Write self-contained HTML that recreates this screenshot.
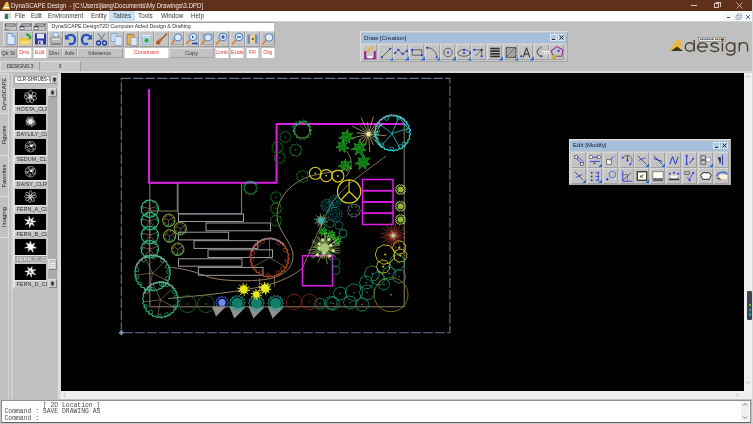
<!DOCTYPE html>
<html><head><meta charset="utf-8">
<style>
*{box-sizing:border-box}
html,body{margin:0;padding:0}
body{width:753px;height:424px;overflow:hidden;position:relative;background:#c0c0c0;font-family:"Liberation Sans",sans-serif;color:#000;will-change:transform}
.a{position:absolute}
.t{position:absolute;white-space:pre;line-height:1}
.tb{position:absolute;height:9.5px;top:48.3px;font-size:5.5px;line-height:8.4px;text-align:center;white-space:pre}
.tbg{background:#c2c2c2;border-right:1px solid #a4a4a4;border-bottom:1px solid #a4a4a4;border-top:1px solid #dcdcdc;border-left:1px solid #dcdcdc;color:#333}
.tbw{background:#fff;color:#e03a3a;border-left:0.5px solid #d8d8d8;border-right:0.5px solid #d8d8d8}
.ib{position:absolute;top:31px;width:15px;height:16px;background:#c6c6c6;border-right:1px solid #9c9c9c;border-bottom:1px solid #9c9c9c;border-top:1px solid #dadada;border-left:1px solid #dadada}
.ib svg,.db svg,.eb svg{position:absolute;left:-1px;top:-1px}
.db{position:absolute;top:44px;width:15px;height:16px;background:#c4c4c4;border-right:1px solid #a2a2a2;border-bottom:1px solid #a2a2a2;border-top:1px solid #d8d8d8;border-left:1px solid #d8d8d8}
.eb{position:absolute;width:15px;height:15px;background:#c4c4c4;border-right:1px solid #a2a2a2;border-bottom:1px solid #a2a2a2;border-top:1px solid #d8d8d8;border-left:1px solid #d8d8d8}
.th{position:absolute;left:15px;width:31px;height:16px;background:#000;overflow:hidden}
.tl{position:absolute;left:14px;width:33px;height:7px;background:#c8c8c8;font-size:5.5px;line-height:7px;color:#2a2a2a;padding-left:1.5px;overflow:hidden;white-space:pre;border-left:1px solid #e8e8e8;border-top:0.5px solid #e8e8e8}
.cmd{position:absolute;font-family:"Liberation Mono",monospace;font-size:6.4px;line-height:6.45px;color:#4a4a4a;white-space:pre}
.vt{position:absolute;left:0;width:8.5px;border-right:1px solid #dedede;border-bottom:1px solid #dcdcdc;background:#c2c2c2}
.vt span{position:absolute;left:50%;top:50%;transform:translate(-50%,-50%) rotate(-90deg);font-size:5.6px;white-space:pre;color:#202020}
</style></head><body>

<div class="a" style="left:0;top:0;width:753px;height:11px;background:#5f301a;border-bottom:1px solid #502614"></div>
<svg class="a" style="left:1px;top:1px" width="10" height="9" viewBox="0 0 10 9"><path d="M1 8.5 L5 1 L7 1 L9 8.5 Z" fill="#f0c050"/><path d="M2.5 6.5 L8 6.5" stroke="#fff" stroke-width="1"/></svg>
<div class="t" style="left:11px;top:1.6px;font-size:7px;color:#f2e8e2;transform:scaleX(0.865);transform-origin:0 0">DynaSCAPE Design  - [C:\Users\jiang\Documents\My Drawings\3.DPD]</div>
<div class="a" style="left:691px;top:5px;width:5.5px;height:0.8px;background:#d8c4b8"></div>
<div class="a" style="left:714px;top:3px;width:5px;height:5px;border:0.8px solid #d8c4b8"></div><div class="a" style="left:715.5px;top:1.8px;width:5px;height:5px;border-top:0.8px solid #d8c4b8;border-right:0.8px solid #d8c4b8"></div>
<svg class="a" style="left:736px;top:2px" width="7" height="7"><path d="M.5 .5L6.5 6.5M6.5 .5L.5 6.5" stroke="#e0d0c8" stroke-width="0.75"/></svg>
<div class="a" style="left:752px;top:0;width:1px;height:424px;background:#d8d8d8"></div>
<div class="a" style="left:0;top:11px;width:752px;height:10px;background:#fff"></div>
<div class="a" style="left:4px;top:13px;width:7px;height:6px;background:#d8d8d8"></div><div class="a" style="left:5px;top:13.5px;width:3px;height:5px;background:#2e7a6a"></div>
<div class="a" style="left:109px;top:11px;width:26px;height:10px;background:#cce4f7"></div>
<div class="t" style="left:14.5px;top:13px;font-size:6.7px;color:#3a3a3a;transform:scaleX(0.94);transform-origin:0 0">File</div>
<div class="t" style="left:31px;top:13px;font-size:6.7px;color:#3a3a3a;transform:scaleX(0.94);transform-origin:0 0">Edit</div>
<div class="t" style="left:48px;top:13px;font-size:6.7px;color:#3a3a3a;transform:scaleX(0.94);transform-origin:0 0">Environment</div>
<div class="t" style="left:90.5px;top:13px;font-size:6.7px;color:#3a3a3a;transform:scaleX(0.94);transform-origin:0 0">Entity</div>
<div class="t" style="left:113px;top:13px;font-size:6.7px;color:#3a3a3a;transform:scaleX(0.94);transform-origin:0 0">Tables</div>
<div class="t" style="left:138px;top:13px;font-size:6.7px;color:#3a3a3a;transform:scaleX(0.94);transform-origin:0 0">Tools</div>
<div class="t" style="left:160.5px;top:13px;font-size:6.7px;color:#3a3a3a;transform:scaleX(0.94);transform-origin:0 0">Window</div>
<div class="t" style="left:190.5px;top:13px;font-size:6.7px;color:#3a3a3a;transform:scaleX(0.94);transform-origin:0 0">Help</div>

<div class="a" style="left:724px;top:11.5px;width:28px;height:9px;background:#f6f6f6"></div><svg class="a" style="left:735px;top:13px" width="7" height="7"><rect x="1" y="2.5" width="4" height="4" fill="none" stroke="#90a4c8" stroke-width=".7"/><rect x="2.5" y="1" width="4" height="4" fill="none" stroke="#90a4c8" stroke-width=".7"/></svg>
<svg class="a" style="left:744.5px;top:13.5px" width="6" height="6"><path d="M1 1L5 5M5 1L1 5" stroke="#5a6a90" stroke-width="1"/></svg>
<div class="a" style="left:726.5px;top:17px;width:3.5px;height:1px;background:#404040"></div>
<div class="a" style="left:0;top:21px;width:752px;height:1px;background:#d4d4d4"></div>
<div class="a" style="left:3.0px;top:22px;width:14px;height:9px;background:#c4c4c4;border-right:1px solid #9a9a9a;border-bottom:1px solid #9a9a9a;border-top:1px solid #dcdcdc;border-left:1px solid #dcdcdc"></div>
<svg class="a" style="left:3.0px;top:22px" width="14" height="9" viewBox="0 0 14 9"><rect x="2.5" y="2" width="9.5" height="2" fill="#e8e8e8" stroke="#404040" stroke-width=".8"/><path d="M2.5 5.5v2h3" fill="none" stroke="#606060" stroke-width=".7"/></svg>
<div class="a" style="left:17.7px;top:22px;width:14px;height:9px;background:#c4c4c4;border-right:1px solid #9a9a9a;border-bottom:1px solid #9a9a9a;border-top:1px solid #dcdcdc;border-left:1px solid #dcdcdc"></div>
<svg class="a" style="left:17.7px;top:22px" width="14" height="9" viewBox="0 0 14 9"><rect x="4" y="2" width="8.5" height="2" fill="#e8e8e8" stroke="#404040" stroke-width=".8"/><rect x="2" y="4.5" width="4" height="3" fill="#fff" stroke="#404040" stroke-width=".6"/><rect x="2" y="4.2" width="4" height="1.2" fill="#203080"/></svg>
<div class="a" style="left:32.4px;top:22px;width:14px;height:9px;background:#c4c4c4;border-right:1px solid #9a9a9a;border-bottom:1px solid #9a9a9a;border-top:1px solid #dcdcdc;border-left:1px solid #dcdcdc"></div>
<svg class="a" style="left:32.4px;top:22px" width="14" height="9" viewBox="0 0 14 9"><rect x="4" y="2" width="8.5" height="2" fill="#e8e8e8" stroke="#404040" stroke-width=".8"/><rect x="2" y="4.5" width="4" height="3" fill="#fff" stroke="#404040" stroke-width=".6"/><rect x="2" y="4.2" width="4" height="1.2" fill="#404040"/></svg>
<div class="a" style="left:48px;top:22px;width:226px;height:9px;background:#fff;border-top:1px solid #a0a0a0"></div>
<div class="t" style="left:51.5px;top:23.6px;font-size:5.25px;color:#303030">DynaSCAPE Design?2D Computer Aided Design &amp; Drafting</div>
<div class="ib" style="left:3.0px"><svg width="15" height="16" viewBox="0 -0.5 15 16"><path d="M4 2h5l3 3v8H4z" fill="#dbe9f8" stroke="#5c8ac8" stroke-width=".8"/><path d="M9 2v3h3" fill="#a8c8f0" stroke="#5c8ac8" stroke-width=".6"/></svg></div>
<div class="ib" style="left:18.1px"><svg width="15" height="16" viewBox="0 -0.5 15 16"><path d="M2 6h4l1 1h5v6H2z" fill="#e8c040"/><path d="M3 9h10l-2 4H2z" fill="#f6dc70"/><path d="M8 2c3 0 5 1 5 4l1 0-2 2-2-2h1c0-1-1-2-3-2z" fill="#30a030"/></svg></div>
<div class="ib" style="left:33.2px"><svg width="15" height="16" viewBox="0 -0.5 15 16"><rect x="2" y="2" width="11" height="11" fill="#2838a8"/><rect x="4" y="2.5" width="7" height="4.5" fill="#e8e8f0"/><rect x="5" y="9" width="5" height="4" fill="#d0d4e8"/><rect x="6" y="10" width="1.5" height="2.5" fill="#2838a8"/></svg></div>
<div class="ib" style="left:48.3px"><svg width="15" height="16" viewBox="0 -0.5 15 16"><path d="M5 2l4-1 2 5H6z" fill="#e8f4ff" stroke="#5a90d0" stroke-width=".6"/><path d="M2 7l3-2h7l2 3v4H3z" fill="#b8b8b8" stroke="#707070" stroke-width=".5"/><path d="M3 12h10v1.5H3z" fill="#808080"/><path d="M4 8h8" stroke="#f0f0f0" stroke-width=".8"/></svg></div>
<div class="ib" style="left:63.4px"><svg width="15" height="16" viewBox="0 -0.5 15 16"><path d="M4 5c3-3 8-2 8 3s-4 5-6 4" fill="none" stroke="#2050c8" stroke-width="2.2"/><path d="M2 3v5h5z" fill="#2050c8"/></svg></div>
<div class="ib" style="left:78.5px"><svg width="15" height="16" viewBox="0 -0.5 15 16"><path d="M11 5c-3-3-8-2-8 3s4 5 6 4" fill="none" stroke="#2050c8" stroke-width="2.2"/><path d="M13 3v5H8z" fill="#2050c8"/></svg></div>
<div class="ib" style="left:93.6px"><svg width="15" height="16" viewBox="0 -0.5 15 16"><path d="M4 2l6 8M11 2L5 10" stroke="#708090" stroke-width="1.1"/><circle cx="4.5" cy="11.5" r="2" fill="none" stroke="#2040a0" stroke-width="1.4"/><circle cx="10.5" cy="11.5" r="2" fill="none" stroke="#2040a0" stroke-width="1.4"/></svg></div>
<div class="ib" style="left:108.7px"><svg width="15" height="16" viewBox="0 -0.5 15 16"><path d="M2 2h6v8H2z" fill="#c8dcf4" stroke="#7090c0" stroke-width=".6"/><path d="M6 5h7v9H6z" fill="#dce8f8" stroke="#7090c0" stroke-width=".6"/></svg></div>
<div class="ib" style="left:123.8px"><svg width="15" height="16" viewBox="0 -0.5 15 16"><path d="M3 3h7v10H3z" fill="#e0b850" stroke="#906020" stroke-width=".6"/><rect x="5" y="2" width="3" height="2" fill="#909090"/><path d="M7 6h6v8H7z" fill="#dce8f8" stroke="#7090c0" stroke-width=".6"/></svg></div>
<div class="ib" style="left:138.9px"><svg width="15" height="16" viewBox="0 -0.5 15 16"><path d="M3 4h9l-1 9H4z" fill="#b8d8f0" stroke="#80a0c0" stroke-width=".5"/><circle cx="7.5" cy="9" r="2.2" fill="#30b040"/><path d="M3 4h9" stroke="#e0f0ff"/></svg></div>
<div class="ib" style="left:154.0px"><svg width="15" height="16" viewBox="0 -0.5 15 16"><path d="M13 2L8 7" stroke="#a06020" stroke-width="1.5"/><path d="M8 6l1 1-4 6-3 0 0-3z" fill="#c06828"/><path d="M3 10l3 3" stroke="#804010"/></svg></div>
<div class="ib" style="left:169.1px"><svg width="15" height="16" viewBox="0 -0.5 15 16"><rect x="4" y="7" width="10" height="6" fill="none" stroke="#8090a8" stroke-width=".6"/><circle cx="9" cy="6" r="3.6" fill="#d8eaff" stroke="#5080c0" stroke-width="1"/><path d="M6 9l-4 4" stroke="#e08020" stroke-width="1.6"/></svg></div>
<div class="ib" style="left:184.2px"><svg width="15" height="16" viewBox="0 -0.5 15 16"><circle cx="9" cy="5.5" r="3.6" fill="#d8eaff" stroke="#5080c0" stroke-width="1"/><path d="M8 4l2 1.5-2 1.5z" fill="#2040a0"/><path d="M6 8.5l-4 4" stroke="#e08020" stroke-width="1.6"/><path d="M8 12h4" stroke="#2040b0" stroke-width="1.5"/><path d="M12 10.5l2 1.5-2 1.5z" fill="#2040b0"/></svg></div>
<div class="ib" style="left:199.3px"><svg width="15" height="16" viewBox="0 -0.5 15 16"><rect x="4" y="3" width="10" height="10" fill="none" stroke="#8090a8" stroke-width=".6"/><circle cx="9" cy="6" r="3.6" fill="#d8eaff" stroke="#5080c0" stroke-width="1"/><path d="M6 9l-4 4" stroke="#e08020" stroke-width="1.6"/></svg></div>
<div class="ib" style="left:214.4px"><svg width="15" height="16" viewBox="0 -0.5 15 16"><circle cx="9" cy="5.5" r="3.8" fill="#d8eaff" stroke="#5080c0" stroke-width="1"/><path d="M7 5.5h4M9 3.5v4" stroke="#2040a0" stroke-width="1.2"/><path d="M6 8.5l-4 4.5" stroke="#e08020" stroke-width="1.6"/></svg></div>
<div class="ib" style="left:229.5px"><svg width="15" height="16" viewBox="0 -0.5 15 16"><circle cx="9" cy="5.5" r="3.8" fill="#d8eaff" stroke="#5080c0" stroke-width="1"/><path d="M7 5.5h4" stroke="#2040a0" stroke-width="1.2"/><path d="M6 8.5l-4 4.5" stroke="#e08020" stroke-width="1.6"/></svg></div>
<div class="ib" style="left:244.6px"><svg width="15" height="16" viewBox="0 -0.5 15 16"><rect x="2.5" y="3" width="2.5" height="9" fill="#6090d0"/><rect x="10" y="3" width="2.5" height="9" fill="#6090d0"/><rect x="5" y="4" width="5" height="7" fill="#f0d890"/><path d="M6.5 7.5l2-1.5v3z" fill="#202020"/></svg></div>
<div class="ib" style="left:259.7px"><svg width="15" height="16" viewBox="0 -0.5 15 16"><rect x="4" y="3" width="10" height="10" fill="none" stroke="#8090a8" stroke-width=".6" stroke-dasharray="1 1"/><circle cx="9" cy="6" r="3.8" fill="#e0f0ff" stroke="#5080c0" stroke-width="1"/><path d="M6 9l-4 4" stroke="#e08020" stroke-width="1.6"/></svg></div>
<div class="tb tbg" style="left:0px;width:16.5px">Qk St</div>
<div class="tb tbw" style="left:17px;width:14.5px">Drw</div>
<div class="tb tbw" style="left:32.5px;width:14.5px">Edit</div>
<div class="tb tbg" style="left:47px;width:14.5px">Dim</div>
<div class="tb tbg" style="left:62px;width:15px">Adv</div>
<div class="tb tbg" style="left:77px;width:45.5px">Inference</div>
<div class="tb tbw" style="left:123.5px;width:45.5px">Constraint</div>
<div class="tb tbg" style="left:169px;width:45px">Copy</div>
<div class="tb tbw" style="left:215px;width:14px">Limit</div>
<div class="tb tbw" style="left:230px;width:14px">Ends</div>
<div class="tb tbw" style="left:245.5px;width:13.5px">Fill</div>
<div class="tb tbw" style="left:260.5px;width:14.5px">Org</div>
<div class="a" style="left:0;top:61px;width:40px;height:10px;background:#c6c6c6;border:1px solid #dadada;border-right-color:#a0a0a0;font-size:5.3px;line-height:8px;text-align:center;color:#303030;letter-spacing:-0.25px">DESIGNG 3</div>
<div class="a" style="left:40px;top:60.5px;width:41px;height:10.5px;background:#c8c8c8;border-top:1px solid #e0e0e0;border-right:1px solid #a0a0a0;font-size:5.3px;line-height:9px;text-align:center;color:#303030">3</div>
<div class="a" style="left:0;top:71px;width:752px;height:1.5px;background:#d6d6d6"></div>
<div class="a" style="left:360px;top:31px;width:208px;height:31px;background:#c8c8c8;border:1px solid #dedede;border-right-color:#a8a8a8;border-bottom-color:#a8a8a8"></div>
<div class="a" style="left:361px;top:33px;width:206px;height:10px;background:#a4c0dc"></div>
<div class="t" style="left:364px;top:34.8px;font-size:6.1px;color:#101828">Draw [Creation]</div>
<div class="a" style="left:550px;top:34px;width:7px;height:7px;background:#b0c6dc;border:0.5px solid #dce8f4"></div><div class="a" style="left:552px;top:38.5px;width:3px;height:1px;background:#202020"></div>
<div class="a" style="left:558px;top:34px;width:7px;height:7px;background:#b0c6dc;border:0.5px solid #dce8f4"></div>
<svg class="a" style="left:559px;top:35px" width="5" height="5"><path d="M.5 .5L4.5 4.5M4.5 .5L.5 4.5" stroke="#202020" stroke-width=".9"/></svg>
<div class="db" style="left:362.0px"><svg width="16" height="17" viewBox="0 0 15 15"><path d="M3 6v7h9V6" fill="none" stroke="#a01890" stroke-width="1.8"/><rect x="5" y="11" width="5" height="2" fill="#fff"/><path d="M4 7L10 2" stroke="#f0b030" stroke-width="1.8"/></svg></div>
<div class="db" style="left:377.6px"><svg width="16" height="17" viewBox="0 0 15 15"><path d="M3.5 12L11.5 4" stroke="#404040" stroke-width=".7"/><circle cx="3.5" cy="12" r="1" fill="#2030e0"/><circle cx="11.5" cy="4" r="1" fill="#2030e0"/><path d="M11 15h4v-4z" fill="#2a6ae0"/></svg></div>
<div class="db" style="left:393.2px"><svg width="16" height="17" viewBox="0 0 15 15"><path d="M2 8L5 5l4 4 4-3" fill="none" stroke="#404040" stroke-width=".7"/><circle cx="2" cy="8" r="1" fill="#2030e0"/><circle cx="5" cy="5" r="1" fill="#2030e0"/><circle cx="9" cy="9" r="1" fill="#2030e0"/><circle cx="13" cy="6" r="1" fill="#2030e0"/><path d="M11 15h4v-4z" fill="#2a6ae0"/></svg></div>
<div class="db" style="left:408.9px"><svg width="16" height="17" viewBox="0 0 15 15"><rect x="3" y="5" width="9" height="5" fill="none" stroke="#404040" stroke-width=".7"/><circle cx="3" cy="5" r="1" fill="#2030e0"/><circle cx="12" cy="10" r="1" fill="#2030e0"/><path d="M11 15h4v-4z" fill="#2a6ae0"/></svg></div>
<div class="db" style="left:424.5px"><svg width="16" height="17" viewBox="0 0 15 15"><path d="M2 3c5 0 9 4 9 9" fill="none" stroke="#404040" stroke-width=".7"/><circle cx="2" cy="3" r="1" fill="#2030e0"/><circle cx="11" cy="12" r="1" fill="#2030e0"/><path d="M11 15h4v-4z" fill="#2a6ae0"/></svg></div>
<div class="db" style="left:440.1px"><svg width="16" height="17" viewBox="0 0 15 15"><circle cx="7.5" cy="7.5" r="4" fill="none" stroke="#404040" stroke-width=".7"/><circle cx="7.5" cy="7.5" r="1" fill="#2030e0"/><path d="M11 15h4v-4z" fill="#2a6ae0"/></svg></div>
<div class="db" style="left:455.7px"><svg width="16" height="17" viewBox="0 0 15 15"><ellipse cx="7.5" cy="8" rx="6" ry="3" fill="none" stroke="#404040" stroke-width=".7"/><circle cx="7.5" cy="5" r="1" fill="#2030e0"/><circle cx="7.5" cy="8" r="1" fill="#2030e0"/><circle cx="13.5" cy="8" r="1" fill="#2030e0"/><path d="M11 15h4v-4z" fill="#2a6ae0"/></svg></div>
<div class="db" style="left:471.3px"><svg width="16" height="17" viewBox="0 0 15 15"><path d="M3 5h7M10 5L4 11M10 5v6" fill="none" stroke="#404040" stroke-width=".7"/><circle cx="3" cy="5" r="1" fill="#2030e0"/><circle cx="10" cy="5" r="1" fill="#202020"/><circle cx="10" cy="11" r="1" fill="#2030e0"/></svg></div>
<div class="db" style="left:487.0px"><svg width="16" height="17" viewBox="0 0 15 15"><rect x="3" y="3" width="9" height="9" fill="#303030"/><path d="M3 5h9M3 7.5h9M3 10h9" stroke="#d0d0d0" stroke-width=".8"/><path d="M11 15h4v-4z" fill="#2a6ae0"/></svg></div>
<div class="db" style="left:502.6px"><svg width="16" height="17" viewBox="0 0 15 15"><rect x="3" y="3" width="9" height="9" fill="#909090" stroke="#303030" stroke-width=".8"/><path d="M3 9l6-6M5 12l7-7M3 6l3-3M8 12l4-4" stroke="#e0e0e0" stroke-width=".7"/><path d="M11 15h4v-4z" fill="#2a6ae0"/></svg></div>
<div class="db" style="left:518.2px"><svg width="16" height="17" viewBox="0 0 15 15"><path d="M5 12L8 3l3 9M6 9h4" fill="none" stroke="#202020" stroke-width=".9"/><circle cx="3" cy="11" r="1" fill="#2030e0"/><path d="M11 15h4v-4z" fill="#2a6ae0"/></svg></div>
<div class="db" style="left:533.8px"><svg width="16" height="17" viewBox="0 0 15 15"><path d="M7 3a4 4 0 1 0 0 8" fill="none" stroke="#303030" stroke-width=".8"/><rect x="8" y="6" width="6" height="3" fill="#fff"/><path d="M9 7v1.5M11 7v1.5M13 7v1.5" stroke="#404040" stroke-width=".5"/><circle cx="7" cy="11" r="1" fill="#2030e0"/></svg></div>
<div class="db" style="left:549.4px"><svg width="16" height="17" viewBox="0 0 15 15"><path d="M7.5 2L13 5l-1 6H4L2 6z" fill="none" stroke="#a02898" stroke-width="1"/><circle cx="9" cy="6" r="1" fill="#2030e0"/><circle cx="5" cy="11" r="2" fill="#a0d040"/><path d="M3 14l2-3 2 3z" fill="#c0a040"/></svg></div>
<svg class="a" style="left:660px;top:30px" width="92" height="30" viewBox="660 30 92 30"><path d="M669 50.8 L676.5 40 L681.5 40 L682.5 50.8 Z" fill="#e8b848"/><path d="M671 51 L677 46.5 L683 51 Z" fill="#3a3420"/><rect x="698.6" y="37.3" width="26.4" height="3.9" fill="#ececec" stroke="#686868" stroke-width=".5"/><path d="M700 39.3h14M715 39.3h3" stroke="#505050" stroke-width="1.6" stroke-dasharray="1.2 .5"/><circle cx="719.5" cy="39.2" r="1.2" fill="#e08830"/><path d="M721 39.3h3" stroke="#404040" stroke-width="1.6"/><g fill="none" stroke="#4a4436" stroke-width="1.45"><ellipse cx="689.7" cy="47" rx="4.4" ry="4.3"/><path d="M694.2 40V51.4"/><path d="M697.9 47H707.3A4.85 4.3 0 1 0 705.9 50.2"/><path d="M718.3 44.1C716.6 42.6 711 42.5 711 45.1C711 47.5 718.7 46.7 718.7 49.3C718.7 52.1 712.3 51.9 710.4 50"/><path d="M722.4 42.6V51.4"/><path d="M734.7 42.6V52.3C734.7 55.6 728 55.6 726.5 53.5"/><ellipse cx="730.5" cy="47" rx="4.2" ry="4.3"/><path d="M739.3 42.6V51.4M739.3 47C739.3 43.8 741.3 42.6 743.6 42.6C746.2 42.6 747.6 44.1 747.6 47.4V51.4"/></g><circle cx="722.4" cy="40.6" r=".85" fill="#4a4436"/></svg>
<div class="a" style="left:0;top:72px;width:61px;height:327px;background:#c0c0c0"></div>
<div class="vt" style="top:73px;height:41px;background:#cacaca;border-top:1px solid #e0e0e0"><span>DynaSCAPE</span></div>
<div class="vt" style="top:114px;height:42px"><span>Figures</span></div>
<div class="vt" style="top:156px;height:41px"><span>Favorites</span></div>
<div class="vt" style="top:197px;height:41px"><span>Imaging</span></div>
<div class="a" style="left:8px;top:238px;width:1px;height:161px;background:#d4d4d4"></div><div class="a" style="left:10.5px;top:73px;width:2px;height:326px;background:#d0d0d0"></div>
<div class="a" style="left:13.5px;top:75.5px;width:37px;height:8.5px;background:#fff;border:0.5px solid #a0a0a0"></div>
<div class="t" style="left:17px;top:77.8px;font-size:4.6px;color:#202020">CLR-SHRUBS-I</div>
<div class="a" style="left:50.5px;top:75.5px;width:8px;height:8.5px;background:#c8c8c8;border:1px solid #e0e0e0;border-right-color:#888;border-bottom-color:#888"></div>
<svg class="a" style="left:52px;top:77px" width="5" height="6"><path d="M.5 2.5h4L2.5 .3z" fill="#101010"/><rect x="1.5" y="2.5" width="2" height="2" fill="#101010"/></svg>
<div class="a" style="left:13px;top:87.5px;width:35px;height:201px;background:#c4c4c4;border-left:1px solid #e4e4e4"></div>
<div class="th" style="top:88.7px;height:16px"><svg width="31" height="16" viewBox="-2.9 -1.5 36.8 19"><ellipse cx="15.5" cy="3.5999999999999996" rx="2.3" ry="3.6" transform="rotate(2 15.5 7.6)" stroke="#fff" fill="none" stroke-width=".6"/><ellipse cx="15.5" cy="3.5999999999999996" rx="2.3" ry="3.6" transform="rotate(56 15.5 7.6)" stroke="#fff" fill="none" stroke-width=".6"/><ellipse cx="15.5" cy="3.5999999999999996" rx="2.3" ry="3.6" transform="rotate(109 15.5 7.6)" stroke="#fff" fill="none" stroke-width=".6"/><ellipse cx="15.5" cy="3.5999999999999996" rx="2.3" ry="3.6" transform="rotate(163 15.5 7.6)" stroke="#fff" fill="none" stroke-width=".6"/><ellipse cx="15.5" cy="3.5999999999999996" rx="2.3" ry="3.6" transform="rotate(211 15.5 7.6)" stroke="#fff" fill="none" stroke-width=".6"/><ellipse cx="15.5" cy="3.5999999999999996" rx="2.3" ry="3.6" transform="rotate(266 15.5 7.6)" stroke="#fff" fill="none" stroke-width=".6"/><ellipse cx="15.5" cy="3.5999999999999996" rx="2.3" ry="3.6" transform="rotate(299 15.5 7.6)" stroke="#fff" fill="none" stroke-width=".6"/><circle cx="15.5" cy="7.6" r="1.8" stroke="#fff" fill="none" stroke-width=".6"/></svg></div>
<div class="tl" style="top:105.1px;background:#cacaca;color:#303030">HOSTA_CLR</div>
<div class="th" style="top:113.7px;height:16px"><svg width="31" height="16" viewBox="-2.9 -1.5 36.8 19"><path d="M16.7 7.6L20.9 7.6M16.7 7.9L22.4 9.5M16.5 8.2L21.5 11.2M16.3 8.5L20.1 12.6M16.0 8.7L18.3 13.3M15.7 8.8L16.5 14.1M15.3 8.8L14.9 11.8M15.0 8.7L12.9 13.0M14.7 8.5L12.1 11.3M14.5 8.2L10.1 10.9M14.3 7.9L10.1 9.1M14.3 7.6L9.5 7.6M14.3 7.3L9.8 6.0M14.5 7.0L10.4 4.5M14.7 6.7L11.1 2.8M15.0 6.5L12.5 1.4M15.3 6.4L14.7 2.5M15.7 6.4L16.5 1.3M16.0 6.5L18.4 1.6M16.3 6.7L19.1 3.6M16.5 7.0L19.6 5.1M16.7 7.3L21.1 6.0" stroke="#fff" stroke-width=".7"/><polygon points="19.5,7.6 17.2,8.6 17.5,11.1 15.5,9.6 13.5,11.1 13.8,8.6 11.5,7.6 13.8,6.6 13.5,4.1 15.5,5.6 17.5,4.1 17.2,6.6" fill="#fff" opacity=".85"/></svg></div>
<div class="tl" style="top:130.1px;background:#cacaca;color:#303030">DAYLILY_CLR</div>
<div class="th" style="top:138.7px;height:16px"><svg width="31" height="16" viewBox="-2.9 -1.5 36.8 19"><circle cx="15.5" cy="7.6" r="6.3" stroke="#fff" fill="none" stroke-width=".6" stroke-width=".8"/><path d="M11.5 9.6C13.5 3.5999999999999996 18.5 10.6 18.5 4.6" stroke="#fff" fill="none" stroke-width=".6" stroke-width=".9"/><circle cx="13.8" cy="11.2" r="1.3" stroke="#fff" fill="none" stroke-width=".6"/><circle cx="11.5" cy="7.1" r="1.3" stroke="#fff" fill="none" stroke-width=".6"/><circle cx="14.7" cy="3.7" r="1.3" stroke="#fff" fill="none" stroke-width=".6"/><circle cx="19.0" cy="5.6" r="1.3" stroke="#fff" fill="none" stroke-width=".6"/><circle cx="18.4" cy="10.3" r="1.3" stroke="#fff" fill="none" stroke-width=".6"/><circle cx="16.5" cy="6.6" r="1.6" fill="#fff"/></svg></div>
<div class="tl" style="top:155.1px;background:#cacaca;color:#303030">SEDUM_CLR</div>
<div class="th" style="top:163.7px;height:16px"><svg width="31" height="16" viewBox="-2.9 -1.5 36.8 19"><circle cx="15.5" cy="7.6" r="6.3" stroke="#fff" fill="none" stroke-width=".6" stroke-width=".8"/><path d="M11.5 9.6C13.5 3.5999999999999996 18.5 10.6 18.5 4.6" stroke="#fff" fill="none" stroke-width=".6" stroke-width=".9"/><circle cx="11.5" cy="8.2" r="1.3" stroke="#fff" fill="none" stroke-width=".6"/><circle cx="13.7" cy="4.0" r="1.3" stroke="#fff" fill="none" stroke-width=".6"/><circle cx="18.4" cy="4.8" r="1.3" stroke="#fff" fill="none" stroke-width=".6"/><circle cx="19.0" cy="9.5" r="1.3" stroke="#fff" fill="none" stroke-width=".6"/><circle cx="14.8" cy="11.5" r="1.3" stroke="#fff" fill="none" stroke-width=".6"/><circle cx="16.5" cy="6.6" r="1.6" fill="#fff"/></svg></div>
<div class="tl" style="top:180.1px;background:#cacaca;color:#303030">DAISY_CLR</div>
<div class="th" style="top:188.7px;height:16px"><svg width="31" height="16" viewBox="-2.9 -1.5 36.8 19"><ellipse cx="15.5" cy="3.3999999999999995" rx="1.6" ry="3" transform="rotate(1 15.5 7.6)" stroke="#fff" fill="none" stroke-width=".6"/><ellipse cx="15.5" cy="3.3999999999999995" rx="1.6" ry="3" transform="rotate(50 15.5 7.6)" stroke="#fff" fill="none" stroke-width=".6"/><ellipse cx="15.5" cy="3.3999999999999995" rx="1.6" ry="3" transform="rotate(86 15.5 7.6)" stroke="#fff" fill="none" stroke-width=".6"/><ellipse cx="15.5" cy="3.3999999999999995" rx="1.6" ry="3" transform="rotate(141 15.5 7.6)" stroke="#fff" fill="none" stroke-width=".6"/><ellipse cx="15.5" cy="3.3999999999999995" rx="1.6" ry="3" transform="rotate(186 15.5 7.6)" stroke="#fff" fill="none" stroke-width=".6"/><ellipse cx="15.5" cy="3.3999999999999995" rx="1.6" ry="3" transform="rotate(232 15.5 7.6)" stroke="#fff" fill="none" stroke-width=".6"/><ellipse cx="15.5" cy="3.3999999999999995" rx="1.6" ry="3" transform="rotate(272 15.5 7.6)" stroke="#fff" fill="none" stroke-width=".6"/><ellipse cx="15.5" cy="3.3999999999999995" rx="1.6" ry="3" transform="rotate(312 15.5 7.6)" stroke="#fff" fill="none" stroke-width=".6"/><path d="M13.5 8.6L17.5 6.6M15.5 5.6V10.6" stroke="#fff" stroke-width=".6"/></svg></div>
<div class="tl" style="top:205.1px;background:#cacaca;color:#303030">FERN_A_CLR</div>
<div class="th" style="top:213.7px;height:16px"><svg width="31" height="16" viewBox="-2.9 -1.5 36.8 19"><polygon points="21.9,7.1 17.9,8.6 19.9,12.4 16.3,10.4 14.4,14.9 13.9,9.9 9.4,11.1 12.3,7.8 8.6,4.9 13.6,5.6 13.6,1.2 15.9,5.3 19.1,2.4 17.5,6.5" fill="#fff" stroke="#fff" stroke-width=".5"/><path d="M13.5 7.6L17.5 8.6M15.5 5.6L14.5 9.6" stroke="#000" stroke-width=".6"/></svg></div>
<div class="tl" style="top:230.1px;background:#cacaca;color:#303030">FERN_B_CLR</div>
<div class="th" style="top:238.7px;height:16px"><svg width="31" height="16" viewBox="-2.9 -1.5 36.8 19"><polygon points="22.7,9.3 17.9,9.6 18.8,14.5 15.5,10.4 12.7,13.4 13.4,9.3 8.5,9.2 12.8,7.0 9.9,3.1 14.1,4.6 15.5,0.8 16.7,5.2 20.8,3.4 18.5,6.9" fill="#fff" stroke="#fff" stroke-width=".5"/></svg></div>
<div class="tl" style="top:255.1px;background:#a0a0a0;color:#f0f0f0">FERN_C_CLR</div>
<div class="th" style="top:263.7px;height:16px"><svg width="31" height="16" viewBox="-2.9 -1.5 36.8 19"><polygon points="21.9,11.4 16.9,9.7 16.5,14.2 14.8,9.7 11.0,12.4 12.6,8.7 8.6,7.0 13.5,6.4 12.0,2.4 15.0,4.3 17.4,1.6 17.4,5.6 22.1,5.1 18.1,7.8" fill="#fff" stroke="#fff" stroke-width=".5"/><path d="M13.5 7.6L17.5 8.6M15.5 5.6L14.5 9.6" stroke="#000" stroke-width=".6"/></svg></div>
<div class="tl" style="top:280.1px;background:#cacaca;color:#303030">FERN_D_CLR</div>
<div class="a" style="left:48px;top:88px;width:9px;height:200px;background:#acacac"></div>
<div class="a" style="left:48px;top:88px;width:9px;height:9px;background:#c8c8c8;border:1px solid #e0e0e0;border-right-color:#888;border-bottom-color:#888"></div>
<svg class="a" style="left:50px;top:90px" width="5" height="6"><path d="M.5 2.5h4L2.5 .3z" fill="#101010"/><rect x="1.5" y="2.5" width="2" height="2" fill="#101010"/></svg>
<div class="a" style="left:48px;top:259px;width:9px;height:11px;background:#c8c8c8;border:1px solid #e0e0e0;border-right-color:#888;border-bottom-color:#888"></div>
<div class="a" style="left:50px;top:262.5px;width:5px;height:0.8px;background:#f0f0f0"></div><div class="a" style="left:50px;top:264.5px;width:5px;height:0.8px;background:#f0f0f0"></div><div class="a" style="left:50px;top:266.5px;width:5px;height:0.8px;background:#f0f0f0"></div>
<div class="a" style="left:48px;top:279px;width:9px;height:9px;background:#c8c8c8;border:1px solid #e0e0e0;border-right-color:#888;border-bottom-color:#888"></div>
<svg class="a" style="left:50px;top:281px" width="5" height="6"><path d="M.5 2.5h4L2.5 .3z" fill="#101010"/><rect x="1.5" y="2.5" width="2" height="2" fill="#101010"/></svg>
<div class="a" style="left:57px;top:73px;width:4px;height:326px;background:#dcdcdc;border-left:1px solid #c8c8c8"></div>
<div class="a" style="left:61px;top:72.5px;width:683px;height:318px;background:#000"></div>
<svg class="a" style="left:61px;top:72.5px" width="683" height="318" viewBox="61 72.5 683 318"><path d="M121.3 77.9H449.9V332.2H121.3Z" fill="none" stroke="#62728a" stroke-width="1.1" stroke-dasharray="10 2"/><path d="M118.6 332.2l2.7-2.7 2.7 2.7-2.7 2.7z" fill="#8090b0"/><rect x="178.5" y="213.5" width="65.0" height="7.5" fill="none" stroke="#a4a4a4" stroke-width="0.95"/><rect x="206" y="222.5" width="64.5" height="7.8" fill="none" stroke="#a4a4a4" stroke-width="0.95"/><rect x="178.5" y="231.7" width="50.1" height="7.7" fill="none" stroke="#a4a4a4" stroke-width="0.95"/><rect x="194" y="240.2" width="63.8" height="7.7" fill="none" stroke="#a4a4a4" stroke-width="0.95"/><rect x="208" y="249.3" width="64.5" height="7.7" fill="none" stroke="#a4a4a4" stroke-width="0.95"/><rect x="178.5" y="258.3" width="63.5" height="7.4" fill="none" stroke="#a4a4a4" stroke-width="0.95"/><rect x="198.3" y="266.9" width="64.7" height="7.9" fill="none" stroke="#a4a4a4" stroke-width="0.95"/><path d="M178 182.5V213.3H241.6V182.5" fill="none" stroke="#8898aa" stroke-width="0.9"/><path d="M149.8 182.5H177.3V210.5H149.8" fill="none" stroke="#a08c6c" stroke-width="0.9"/><path d="M149.8 182.5V306.3H404.2V123.5" fill="none" stroke="#a08c6c" stroke-width="0.9"/><path d="M168 267C180 267 195 271 210 277C225 281 250 281 265 279C280 277 292 270 293 257C294 245 282 235 278 222C274 208 282 186 309 176C325 172 340 170 352 168" fill="none" stroke="#a08c6c" stroke-width="0.9"/><path d="M168 298C190 296 215 294 240 290C260 287 285 282 302 268" fill="none" stroke="#a08c6c" stroke-width="0.9"/><path d="M259.6 278V290M274.6 276V286" stroke="#a08c6c" stroke-width="0.8"/><path d="M302 269C310 250 320 226 330 206C338 192 350 182 372 166C378 162 382 158 386 156" fill="none" stroke="#a08c6c" stroke-width="0.8"/><path d="M346 150C353 158 353 168 346 176" fill="none" stroke="#a08c6c" stroke-width="0.8"/><path d="M149 88.5V182.2H276.6V123.4H404" fill="none" stroke="#de1ee6" stroke-width="2"/><rect x="362.5" y="179" width="30.5" height="11.2" fill="none" stroke="#de1ee6" stroke-width="1.5"/><rect x="362.5" y="190.2" width="30.5" height="11.2" fill="none" stroke="#de1ee6" stroke-width="1.5"/><rect x="362.5" y="201.5" width="30.5" height="11.2" fill="none" stroke="#de1ee6" stroke-width="1.5"/><rect x="362.5" y="212.8" width="30.5" height="11.2" fill="none" stroke="#de1ee6" stroke-width="1.5"/><rect x="302.5" y="255.3" width="30" height="30" fill="none" stroke="#de1ee6" stroke-width="1.5"/><path d="M158.4 208.2 L158.5 209.7 L157.7 211.1 L157.2 212.5 L156.6 213.9 L155.2 214.6 L154.1 215.6 L152.8 216.5 L151.3 216.5 L149.8 216.8 L148.3 216.9 L146.9 216.1 L145.5 215.6 L144.1 215.0 L143.4 213.6 L142.4 212.5 L141.5 211.2 L141.5 209.7 L141.2 208.2 L141.1 206.7 L141.9 205.3 L142.4 203.9 L143.0 202.5 L144.4 201.8 L145.5 200.8 L146.8 199.9 L148.3 199.9 L149.8 199.6 L151.3 199.5 L152.7 200.3 L154.1 200.8 L155.5 201.4 L156.2 202.8 L157.2 203.9 L158.1 205.2 L158.1 206.7 L158.4 208.2Z" fill="none" stroke="#2cb47c" stroke-width="1.15"/><circle cx="157.6" cy="207.8" r="0.9" fill="none" stroke="#2cb47c" stroke-width="0.7" /><circle cx="152.2" cy="215.6" r="0.8" fill="none" stroke="#2cb47c" stroke-width="0.7" /><circle cx="147.3" cy="215.6" r="0.8" fill="none" stroke="#2cb47c" stroke-width="0.7" /><circle cx="142.1" cy="207.3" r="1.0" fill="none" stroke="#2cb47c" stroke-width="0.7" /><circle cx="145.7" cy="201.5" r="0.8" fill="none" stroke="#2cb47c" stroke-width="0.7" /><circle cx="153.5" cy="201.3" r="0.9" fill="none" stroke="#2cb47c" stroke-width="0.7" /><path d="M149.8 208.2L155.0 214.7M149.8 208.2L145.2 215.2M149.8 208.2L141.8 206.0M149.8 208.2L149.4 199.9M149.8 208.2L157.6 205.3" stroke="#a08c6c" stroke-width="0.6"/><path d="M158.4 220.6 L158.5 222.1 L157.7 223.5 L157.2 224.9 L156.6 226.3 L155.2 227.0 L154.1 228.0 L152.8 228.9 L151.3 228.9 L149.8 229.2 L148.3 229.3 L146.9 228.5 L145.5 228.0 L144.1 227.4 L143.4 226.0 L142.4 224.9 L141.5 223.6 L141.5 222.1 L141.2 220.6 L141.1 219.1 L141.9 217.7 L142.4 216.3 L143.0 214.9 L144.4 214.2 L145.5 213.2 L146.8 212.3 L148.3 212.3 L149.8 212.0 L151.3 211.9 L152.7 212.7 L154.1 213.2 L155.5 213.8 L156.2 215.2 L157.2 216.3 L158.1 217.6 L158.1 219.1 L158.4 220.6Z" fill="none" stroke="#2cb47c" stroke-width="1.15"/><circle cx="157.5" cy="219.2" r="0.9" fill="none" stroke="#2cb47c" stroke-width="0.7" /><circle cx="155.3" cy="226.1" r="0.9" fill="none" stroke="#2cb47c" stroke-width="0.7" /><circle cx="144.3" cy="226.1" r="0.7" fill="none" stroke="#2cb47c" stroke-width="0.7" /><circle cx="142.2" cy="218.8" r="1.0" fill="none" stroke="#2cb47c" stroke-width="0.7" /><circle cx="146.5" cy="213.5" r="1.0" fill="none" stroke="#2cb47c" stroke-width="0.7" /><circle cx="154.0" cy="214.1" r="0.9" fill="none" stroke="#2cb47c" stroke-width="0.7" /><path d="M149.8 220.6L155.0 227.1M149.8 220.6L145.2 227.6M149.8 220.6L141.8 218.4M149.8 220.6L149.4 212.3M149.8 220.6L157.6 217.7" stroke="#a08c6c" stroke-width="0.6"/><path d="M158.4 234.6 L158.5 236.1 L157.7 237.5 L157.2 238.9 L156.6 240.3 L155.2 241.0 L154.1 242.0 L152.8 242.9 L151.3 242.9 L149.8 243.2 L148.3 243.3 L146.9 242.5 L145.5 242.0 L144.1 241.4 L143.4 240.0 L142.4 238.9 L141.5 237.6 L141.5 236.1 L141.2 234.6 L141.1 233.1 L141.9 231.7 L142.4 230.3 L143.0 228.9 L144.4 228.2 L145.5 227.2 L146.8 226.3 L148.3 226.3 L149.8 226.0 L151.3 225.9 L152.7 226.7 L154.1 227.2 L155.5 227.8 L156.2 229.2 L157.2 230.3 L158.1 231.6 L158.1 233.1 L158.4 234.6Z" fill="none" stroke="#2cb47c" stroke-width="1.15"/><circle cx="157.6" cy="234.4" r="0.7" fill="none" stroke="#2cb47c" stroke-width="0.7" /><circle cx="153.4" cy="241.5" r="1.0" fill="none" stroke="#2cb47c" stroke-width="0.7" /><circle cx="145.7" cy="241.2" r="0.9" fill="none" stroke="#2cb47c" stroke-width="0.7" /><circle cx="142.1" cy="233.6" r="0.9" fill="none" stroke="#2cb47c" stroke-width="0.7" /><circle cx="144.3" cy="229.1" r="0.9" fill="none" stroke="#2cb47c" stroke-width="0.7" /><circle cx="154.1" cy="228.1" r="1.0" fill="none" stroke="#2cb47c" stroke-width="0.7" /><path d="M149.8 234.6L155.0 241.1M149.8 234.6L145.2 241.6M149.8 234.6L141.8 232.4M149.8 234.6L149.4 226.3M149.8 234.6L157.6 231.7" stroke="#a08c6c" stroke-width="0.6"/><path d="M158.4 248.7 L158.5 250.2 L157.7 251.6 L157.2 253.0 L156.6 254.4 L155.2 255.1 L154.1 256.1 L152.8 257.0 L151.3 257.0 L149.8 257.3 L148.3 257.4 L146.9 256.6 L145.5 256.1 L144.1 255.5 L143.4 254.1 L142.4 253.0 L141.5 251.7 L141.5 250.2 L141.2 248.7 L141.1 247.2 L141.9 245.8 L142.4 244.4 L143.0 243.0 L144.4 242.3 L145.5 241.3 L146.8 240.4 L148.3 240.4 L149.8 240.1 L151.3 240.0 L152.7 240.8 L154.1 241.3 L155.5 241.9 L156.2 243.3 L157.2 244.4 L158.1 245.7 L158.1 247.2 L158.4 248.7Z" fill="none" stroke="#2cb47c" stroke-width="1.15"/><circle cx="157.5" cy="249.7" r="0.7" fill="none" stroke="#2cb47c" stroke-width="0.7" /><circle cx="155.1" cy="254.4" r="0.8" fill="none" stroke="#2cb47c" stroke-width="0.7" /><circle cx="146.0" cy="255.5" r="0.9" fill="none" stroke="#2cb47c" stroke-width="0.7" /><circle cx="142.0" cy="248.3" r="1.0" fill="none" stroke="#2cb47c" stroke-width="0.7" /><circle cx="144.2" cy="243.3" r="0.9" fill="none" stroke="#2cb47c" stroke-width="0.7" /><circle cx="155.1" cy="243.0" r="1.1" fill="none" stroke="#2cb47c" stroke-width="0.7" /><path d="M149.8 248.7L155.0 255.2M149.8 248.7L145.2 255.7M149.8 248.7L141.8 246.5M149.8 248.7L149.4 240.4M149.8 248.7L157.6 245.8" stroke="#a08c6c" stroke-width="0.6"/><path d="M170.0 272.5 L170.5 274.0 L169.2 275.2 L169.5 276.7 L169.7 278.2 L168.0 279.1 L168.0 280.6 L167.8 282.2 L166.0 282.6 L165.6 284.1 L165.0 285.6 L163.2 285.6 L162.4 286.9 L161.6 288.2 L159.7 287.8 L158.7 288.9 L157.5 289.9 L155.9 289.1 L154.6 289.9 L153.2 290.6 L151.8 289.4 L150.4 289.9 L148.9 290.2 L147.8 288.7 L146.3 288.9 L144.7 288.9 L144.1 287.1 L142.6 286.9 L141.0 286.5 L140.8 284.7 L139.4 284.1 L138.0 283.4 L138.2 281.5 L137.0 280.6 L135.8 279.6 L136.5 277.8 L135.5 276.7 L134.6 275.4 L135.7 273.9 L135.0 272.5 L134.5 271.0 L135.8 269.8 L135.5 268.3 L135.3 266.8 L137.0 265.9 L137.0 264.4 L137.2 262.8 L139.0 262.4 L139.4 260.9 L140.0 259.4 L141.8 259.4 L142.6 258.1 L143.4 256.8 L145.3 257.2 L146.3 256.1 L147.5 255.1 L149.1 255.9 L150.4 255.1 L151.8 254.4 L153.2 255.6 L154.6 255.1 L156.1 254.8 L157.2 256.3 L158.7 256.1 L160.3 256.1 L160.9 257.9 L162.4 258.1 L164.0 258.5 L164.2 260.3 L165.6 260.9 L167.0 261.6 L166.8 263.5 L168.0 264.4 L169.2 265.4 L168.5 267.2 L169.5 268.3 L170.4 269.6 L169.3 271.1 L170.0 272.5Z" fill="none" stroke="#2cb47c" stroke-width="1.1"/><circle cx="168.3" cy="271.4" r="1.8" fill="none" stroke="#2cb47c" stroke-width="0.7" /><circle cx="167.4" cy="278.0" r="2.0" fill="none" stroke="#2cb47c" stroke-width="0.7" /><circle cx="162.5" cy="284.8" r="1.7" fill="none" stroke="#2cb47c" stroke-width="0.7" /><circle cx="151.8" cy="288.4" r="1.8" fill="none" stroke="#2cb47c" stroke-width="0.7" /><circle cx="140.5" cy="282.9" r="1.5" fill="none" stroke="#2cb47c" stroke-width="0.7" /><circle cx="137.3" cy="277.0" r="1.7" fill="none" stroke="#2cb47c" stroke-width="0.7" /><circle cx="136.9" cy="269.3" r="1.9" fill="none" stroke="#2cb47c" stroke-width="0.7" /><circle cx="143.5" cy="259.4" r="2.0" fill="none" stroke="#2cb47c" stroke-width="0.7" /><circle cx="153.7" cy="256.7" r="1.7" fill="none" stroke="#2cb47c" stroke-width="0.7" /><circle cx="162.4" cy="260.1" r="1.8" fill="none" stroke="#2cb47c" stroke-width="0.7" /><circle cx="167.1" cy="266.2" r="1.7" fill="none" stroke="#2cb47c" stroke-width="0.7" /><path d="M152.5 272.5L167.4 280.6M152.5 272.5L149.4 289.2M152.5 272.5L135.7 274.7M152.5 272.5L145.2 257.2M152.5 272.5L164.8 260.8" stroke="#a08c6c" stroke-width="0.6"/><path d="M135.8 266.4A17.8 17.8 0 0 1 166.1 261.1" fill="none" stroke="#9a94a8" stroke-width="1.6" stroke-dasharray="1.4 0.6"/><path d="M178.0 299.3 L178.5 300.8 L177.2 302.0 L177.5 303.5 L177.7 305.0 L176.0 305.9 L176.0 307.4 L175.8 309.0 L174.0 309.4 L173.6 310.9 L173.0 312.4 L171.2 312.4 L170.4 313.7 L169.6 315.0 L167.7 314.6 L166.7 315.7 L165.5 316.7 L163.9 315.9 L162.6 316.7 L161.2 317.4 L159.8 316.2 L158.4 316.7 L156.9 317.0 L155.8 315.5 L154.3 315.7 L152.7 315.7 L152.1 313.9 L150.6 313.7 L149.0 313.3 L148.8 311.5 L147.4 310.9 L146.0 310.2 L146.2 308.3 L145.0 307.4 L143.8 306.4 L144.5 304.6 L143.5 303.5 L142.6 302.2 L143.7 300.7 L143.0 299.3 L142.5 297.8 L143.8 296.6 L143.5 295.1 L143.3 293.6 L145.0 292.7 L145.0 291.2 L145.2 289.6 L147.0 289.2 L147.4 287.7 L148.0 286.2 L149.8 286.2 L150.6 284.9 L151.4 283.6 L153.3 284.0 L154.3 282.9 L155.5 281.9 L157.1 282.7 L158.4 281.9 L159.8 281.2 L161.2 282.4 L162.6 281.9 L164.1 281.6 L165.2 283.1 L166.7 282.9 L168.3 282.9 L168.9 284.7 L170.4 284.9 L172.0 285.3 L172.2 287.1 L173.6 287.7 L175.0 288.4 L174.8 290.3 L176.0 291.2 L177.2 292.2 L176.5 294.0 L177.5 295.1 L178.4 296.4 L177.3 297.9 L178.0 299.3Z" fill="none" stroke="#2cb47c" stroke-width="1.1"/><circle cx="176.0" cy="296.1" r="1.7" fill="none" stroke="#2cb47c" stroke-width="0.7" /><circle cx="174.8" cy="306.2" r="1.8" fill="none" stroke="#2cb47c" stroke-width="0.7" /><circle cx="166.7" cy="313.9" r="1.8" fill="none" stroke="#2cb47c" stroke-width="0.7" /><circle cx="160.1" cy="315.2" r="1.5" fill="none" stroke="#2cb47c" stroke-width="0.7" /><circle cx="150.6" cy="311.7" r="2.1" fill="none" stroke="#2cb47c" stroke-width="0.7" /><circle cx="145.9" cy="305.6" r="1.5" fill="none" stroke="#2cb47c" stroke-width="0.7" /><circle cx="146.9" cy="291.1" r="1.7" fill="none" stroke="#2cb47c" stroke-width="0.7" /><circle cx="149.8" cy="287.5" r="1.9" fill="none" stroke="#2cb47c" stroke-width="0.7" /><circle cx="161.3" cy="283.4" r="2.1" fill="none" stroke="#2cb47c" stroke-width="0.7" /><circle cx="167.1" cy="284.8" r="1.5" fill="none" stroke="#2cb47c" stroke-width="0.7" /><circle cx="174.1" cy="291.2" r="1.9" fill="none" stroke="#2cb47c" stroke-width="0.7" /><path d="M160.5 299.3L175.4 307.4M160.5 299.3L157.4 316.0M160.5 299.3L143.7 301.5M160.5 299.3L153.2 284.0M160.5 299.3L172.8 287.6" stroke="#a08c6c" stroke-width="0.6"/><path d="M143.8 293.2A17.8 17.8 0 0 1 174.1 287.9" fill="none" stroke="#9a94a8" stroke-width="1.6" stroke-dasharray="1.4 0.6"/><circle cx="168.8" cy="219.8" r="6.2" fill="none" stroke="#94a038" stroke-width="1.0" /><path d="M163.3 222.8A6.2 6.2 0 0 0 174.8 221.3" fill="none" stroke="#28a878" stroke-width="1.0"/><circle cx="173.7" cy="220.8" r="0.9" fill="none" stroke="#8a9a3a" stroke-width="0.5" /><circle cx="171.6" cy="224.0" r="0.9" fill="none" stroke="#8a9a3a" stroke-width="0.5" /><circle cx="167.8" cy="224.7" r="0.9" fill="none" stroke="#8a9a3a" stroke-width="0.5" /><circle cx="164.6" cy="222.6" r="0.9" fill="none" stroke="#8a9a3a" stroke-width="0.5" /><circle cx="163.9" cy="218.8" r="0.9" fill="none" stroke="#8a9a3a" stroke-width="0.5" /><circle cx="166.0" cy="215.6" r="0.9" fill="none" stroke="#8a9a3a" stroke-width="0.5" /><circle cx="169.8" cy="214.9" r="0.9" fill="none" stroke="#8a9a3a" stroke-width="0.5" /><circle cx="173.0" cy="217.0" r="0.9" fill="none" stroke="#8a9a3a" stroke-width="0.5" /><path d="M168.8 219.8L164.3 217.1M168.8 219.8L173.3 217.3M168.8 219.8L168.7 225.0" stroke="#a08c6c" stroke-width="0.6"/><circle cx="180.3" cy="228.0" r="6.2" fill="none" stroke="#94a038" stroke-width="1.0" /><path d="M174.8 231.0A6.2 6.2 0 0 0 186.3 229.5" fill="none" stroke="#28a878" stroke-width="1.0"/><circle cx="185.2" cy="229.0" r="0.9" fill="none" stroke="#8a9a3a" stroke-width="0.5" /><circle cx="183.1" cy="232.2" r="0.9" fill="none" stroke="#8a9a3a" stroke-width="0.5" /><circle cx="179.3" cy="232.9" r="0.9" fill="none" stroke="#8a9a3a" stroke-width="0.5" /><circle cx="176.1" cy="230.8" r="0.9" fill="none" stroke="#8a9a3a" stroke-width="0.5" /><circle cx="175.4" cy="227.0" r="0.9" fill="none" stroke="#8a9a3a" stroke-width="0.5" /><circle cx="177.5" cy="223.8" r="0.9" fill="none" stroke="#8a9a3a" stroke-width="0.5" /><circle cx="181.3" cy="223.1" r="0.9" fill="none" stroke="#8a9a3a" stroke-width="0.5" /><circle cx="184.5" cy="225.2" r="0.9" fill="none" stroke="#8a9a3a" stroke-width="0.5" /><path d="M180.3 228.0L175.8 225.3M180.3 228.0L184.8 225.5M180.3 228.0L180.2 233.2" stroke="#a08c6c" stroke-width="0.6"/><circle cx="169.6" cy="235.4" r="6.2" fill="none" stroke="#94a038" stroke-width="1.0" /><path d="M164.1 238.4A6.2 6.2 0 0 0 175.6 236.9" fill="none" stroke="#28a878" stroke-width="1.0"/><circle cx="174.5" cy="236.4" r="0.9" fill="none" stroke="#8a9a3a" stroke-width="0.5" /><circle cx="172.4" cy="239.6" r="0.9" fill="none" stroke="#8a9a3a" stroke-width="0.5" /><circle cx="168.6" cy="240.3" r="0.9" fill="none" stroke="#8a9a3a" stroke-width="0.5" /><circle cx="165.4" cy="238.2" r="0.9" fill="none" stroke="#8a9a3a" stroke-width="0.5" /><circle cx="164.7" cy="234.4" r="0.9" fill="none" stroke="#8a9a3a" stroke-width="0.5" /><circle cx="166.8" cy="231.2" r="0.9" fill="none" stroke="#8a9a3a" stroke-width="0.5" /><circle cx="170.6" cy="230.5" r="0.9" fill="none" stroke="#8a9a3a" stroke-width="0.5" /><circle cx="173.8" cy="232.6" r="0.9" fill="none" stroke="#8a9a3a" stroke-width="0.5" /><path d="M169.6 235.4L165.1 232.7M169.6 235.4L174.1 232.9M169.6 235.4L169.5 240.6" stroke="#a08c6c" stroke-width="0.6"/><circle cx="177.8" cy="248.7" r="6.2" fill="none" stroke="#94a038" stroke-width="1.0" /><path d="M172.3 251.7A6.2 6.2 0 0 0 183.8 250.2" fill="none" stroke="#28a878" stroke-width="1.0"/><circle cx="182.7" cy="249.7" r="0.9" fill="none" stroke="#8a9a3a" stroke-width="0.5" /><circle cx="180.6" cy="252.9" r="0.9" fill="none" stroke="#8a9a3a" stroke-width="0.5" /><circle cx="176.8" cy="253.6" r="0.9" fill="none" stroke="#8a9a3a" stroke-width="0.5" /><circle cx="173.6" cy="251.5" r="0.9" fill="none" stroke="#8a9a3a" stroke-width="0.5" /><circle cx="172.9" cy="247.7" r="0.9" fill="none" stroke="#8a9a3a" stroke-width="0.5" /><circle cx="175.0" cy="244.5" r="0.9" fill="none" stroke="#8a9a3a" stroke-width="0.5" /><circle cx="178.8" cy="243.8" r="0.9" fill="none" stroke="#8a9a3a" stroke-width="0.5" /><circle cx="182.0" cy="245.9" r="0.9" fill="none" stroke="#8a9a3a" stroke-width="0.5" /><path d="M177.8 248.7L173.3 246.0M177.8 248.7L182.3 246.2M177.8 248.7L177.7 253.9" stroke="#a08c6c" stroke-width="0.6"/><path d="M288.5 257.2 L289.1 258.7 L287.7 259.9 L288.0 261.4 L288.2 263.0 L286.6 263.9 L286.6 265.4 L286.5 267.0 L284.7 267.6 L284.4 269.0 L283.9 270.5 L282.0 270.7 L281.3 272.1 L280.5 273.4 L278.7 273.1 L277.7 274.3 L276.7 275.5 L274.9 274.8 L273.7 275.7 L272.4 276.6 L270.9 275.5 L269.5 276.2 L268.0 276.8 L266.8 275.4 L265.3 275.7 L263.7 275.9 L262.8 274.3 L261.3 274.3 L259.7 274.2 L259.1 272.4 L257.7 272.1 L256.2 271.6 L256.0 269.7 L254.6 269.0 L253.3 268.2 L253.6 266.4 L252.4 265.4 L251.2 264.4 L251.9 262.6 L251.0 261.4 L250.1 260.1 L251.2 258.6 L250.5 257.2 L249.9 255.7 L251.3 254.5 L251.0 253.0 L250.8 251.4 L252.4 250.5 L252.4 249.0 L252.5 247.4 L254.3 246.8 L254.6 245.4 L255.1 243.9 L257.0 243.7 L257.7 242.3 L258.5 241.0 L260.3 241.3 L261.3 240.1 L262.3 238.9 L264.1 239.6 L265.3 238.7 L266.6 237.8 L268.1 238.9 L269.5 238.2 L271.0 237.6 L272.2 239.0 L273.7 238.7 L275.3 238.5 L276.2 240.1 L277.7 240.1 L279.3 240.2 L279.9 242.0 L281.3 242.3 L282.8 242.8 L283.0 244.7 L284.4 245.4 L285.7 246.2 L285.4 248.0 L286.6 249.0 L287.8 250.0 L287.1 251.8 L288.0 253.0 L288.9 254.3 L287.8 255.8 L288.5 257.2Z" fill="none" stroke="#a8401c" stroke-width="1.4"/><circle cx="286.5" cy="260.2" r="1.6" fill="none" stroke="#a8401c" stroke-width="0.7" /><circle cx="282.7" cy="268.3" r="2.2" fill="none" stroke="#a8401c" stroke-width="0.7" /><circle cx="278.1" cy="272.2" r="1.9" fill="none" stroke="#a8401c" stroke-width="0.7" /><circle cx="268.2" cy="274.4" r="1.5" fill="none" stroke="#a8401c" stroke-width="0.7" /><circle cx="261.3" cy="272.4" r="2.1" fill="none" stroke="#a8401c" stroke-width="0.7" /><circle cx="252.3" cy="259.0" r="1.6" fill="none" stroke="#a8401c" stroke-width="0.7" /><circle cx="252.8" cy="252.8" r="2.0" fill="none" stroke="#a8401c" stroke-width="0.7" /><circle cx="258.2" cy="244.1" r="2.0" fill="none" stroke="#a8401c" stroke-width="0.7" /><circle cx="262.6" cy="241.3" r="1.8" fill="none" stroke="#a8401c" stroke-width="0.7" /><circle cx="278.7" cy="242.5" r="1.9" fill="none" stroke="#a8401c" stroke-width="0.7" /><circle cx="285.0" cy="249.5" r="1.9" fill="none" stroke="#a8401c" stroke-width="0.7" /><path d="M269.5 257.2L269.5 238.8M269.5 257.2L285.5 266.4M269.5 257.2L253.5 266.4" stroke="#a08c6c" stroke-width="0.6"/><path d="M251.4 250.6A19.3 19.3 0 0 1 284.3 244.8" fill="none" stroke="#9a94a8" stroke-width="1.6" stroke-dasharray="1.4 0.6"/><circle cx="187.5" cy="303.5" r="8.5" fill="none" stroke="#1a7a1a" stroke-width="0.8" /><circle cx="187.5" cy="303.5" r="0.6" fill="#1a7a1a" stroke="#1a7a1a" stroke-width="0.6" /><circle cx="206.0" cy="303.5" r="8.5" fill="none" stroke="#1a7a1a" stroke-width="0.8" /><circle cx="206.0" cy="303.5" r="0.6" fill="#1a7a1a" stroke="#1a7a1a" stroke-width="0.6" /><polygon points="228.5,302.0 227.0,303.3 227.6,305.2 225.7,305.7 225.2,307.6 223.3,307.0 222.0,308.5 220.7,307.0 218.8,307.6 218.3,305.7 216.4,305.2 217.0,303.3 215.5,302.0 217.0,300.7 216.4,298.8 218.3,298.3 218.8,296.4 220.7,297.0 222.0,295.5 223.3,297.0 225.2,296.4 225.7,298.3 227.6,298.8 227.0,300.7" fill="none" stroke="#3050e0" stroke-width="1"/><circle cx="222.0" cy="302.0" r="3.5" fill="#6a8cf0" stroke="#6080f0" stroke-width="0.5" /><path d="M229.3 306L245.3 307L234.3 318Z" fill="#909090"/><polygon points="245.3,302.7 243.5,304.1 244.5,306.2 242.3,306.7 242.3,309.0 240.1,308.5 239.1,310.5 237.3,309.1 235.5,310.5 234.5,308.5 232.3,309.0 232.3,306.7 230.1,306.2 231.1,304.1 229.3,302.7 231.1,301.3 230.1,299.2 232.3,298.7 232.3,296.4 234.5,296.9 235.5,294.9 237.3,296.3 239.1,294.9 240.1,296.9 242.3,296.4 242.3,298.7 244.5,299.2 243.5,301.3" fill="none" stroke="#20a090" stroke-width="0.9"/><circle cx="237.3" cy="302.7" r="5.5" fill="#10806c" stroke="#0e8070" stroke-width="0" /><path d="M248.4 306L264.4 307L253.4 318Z" fill="#909090"/><polygon points="264.4,302.7 262.6,304.1 263.6,306.2 261.4,306.7 261.4,309.0 259.2,308.5 258.2,310.5 256.4,309.1 254.6,310.5 253.6,308.5 251.4,309.0 251.4,306.7 249.2,306.2 250.2,304.1 248.4,302.7 250.2,301.3 249.2,299.2 251.4,298.7 251.4,296.4 253.6,296.9 254.6,294.9 256.4,296.3 258.2,294.9 259.2,296.9 261.4,296.4 261.4,298.7 263.6,299.2 262.6,301.3" fill="none" stroke="#20a090" stroke-width="0.9"/><circle cx="256.4" cy="302.7" r="5.5" fill="#10806c" stroke="#0e8070" stroke-width="0" /><path d="M267.6 306L283.6 307L272.6 318Z" fill="#909090"/><polygon points="283.6,302.7 281.8,304.1 282.8,306.2 280.6,306.7 280.6,309.0 278.4,308.5 277.4,310.5 275.6,309.1 273.8,310.5 272.8,308.5 270.6,309.0 270.6,306.7 268.4,306.2 269.4,304.1 267.6,302.7 269.4,301.3 268.4,299.2 270.6,298.7 270.6,296.4 272.8,296.9 273.8,294.9 275.6,296.3 277.4,294.9 278.4,296.9 280.6,296.4 280.6,298.7 282.8,299.2 281.8,301.3" fill="none" stroke="#20a090" stroke-width="0.9"/><circle cx="275.6" cy="302.7" r="5.5" fill="#10806c" stroke="#0e8070" stroke-width="0" /><path d="M212 306L226 306L216 316Z" fill="#909090"/><path d="M243.7 288.9L250.1 290.2M243.7 288.9L247.7 291.1M243.7 288.9L248.1 293.7M243.7 288.9L245.6 293.0M243.7 288.9L244.4 295.4M243.7 288.9L242.8 293.4M243.7 288.9L240.5 294.6M243.7 288.9L240.3 292.0M243.7 288.9L237.8 291.6M243.7 288.9L239.2 289.4M243.7 288.9L237.3 287.6M243.7 288.9L239.7 286.7M243.7 288.9L239.3 284.1M243.7 288.9L241.8 284.8M243.7 288.9L243.0 282.4M243.7 288.9L244.6 284.4M243.7 288.9L246.9 283.2M243.7 288.9L247.1 285.8M243.7 288.9L249.6 286.2M243.7 288.9L248.2 288.4" stroke="#f0f020" stroke-width="0.9"/><circle cx="243.7" cy="288.9" r="3.6" fill="#e8e820" stroke="#e8e820" stroke-width="0" /><path d="M265.0 287.8L271.4 289.1M265.0 287.8L269.0 290.0M265.0 287.8L269.4 292.6M265.0 287.8L266.9 291.9M265.0 287.8L265.7 294.3M265.0 287.8L264.1 292.3M265.0 287.8L261.8 293.5M265.0 287.8L261.6 290.9M265.0 287.8L259.1 290.5M265.0 287.8L260.5 288.3M265.0 287.8L258.6 286.5M265.0 287.8L261.0 285.6M265.0 287.8L260.6 283.0M265.0 287.8L263.1 283.7M265.0 287.8L264.3 281.3M265.0 287.8L265.9 283.3M265.0 287.8L268.2 282.1M265.0 287.8L268.4 284.7M265.0 287.8L270.9 285.1M265.0 287.8L269.5 287.3" stroke="#f0f020" stroke-width="0.9"/><circle cx="265.0" cy="287.8" r="3.6" fill="#e8e820" stroke="#e8e820" stroke-width="0" /><path d="M256.4 294.0L261.8 295.1M256.4 294.0L259.8 295.9M256.4 294.0L260.1 298.1M256.4 294.0L258.0 297.5M256.4 294.0L257.0 299.5M256.4 294.0L255.6 297.8M256.4 294.0L253.7 298.8M256.4 294.0L253.6 296.6M256.4 294.0L251.4 296.3M256.4 294.0L252.6 294.4M256.4 294.0L251.0 292.9M256.4 294.0L253.0 292.1M256.4 294.0L252.7 289.9M256.4 294.0L254.8 290.5M256.4 294.0L255.8 288.5M256.4 294.0L257.2 290.2M256.4 294.0L259.1 289.2M256.4 294.0L259.2 291.4M256.4 294.0L261.4 291.7M256.4 294.0L260.2 293.6" stroke="#f0f020" stroke-width="0.9"/><circle cx="256.4" cy="294.0" r="3.0" fill="#e8e820" stroke="#e8e820" stroke-width="0" /><path d="M265.7 288.0L270.6 289.0M265.7 288.0L268.7 289.7M265.7 288.0L269.1 291.7M265.7 288.0L267.2 291.2M265.7 288.0L266.3 293.0M265.7 288.0L265.0 291.4M265.7 288.0L263.2 292.4M265.7 288.0L263.1 290.4M265.7 288.0L261.2 290.1M265.7 288.0L262.2 288.4M265.7 288.0L260.8 287.0M265.7 288.0L262.7 286.3M265.7 288.0L262.3 284.3M265.7 288.0L264.2 284.8M265.7 288.0L265.1 283.0M265.7 288.0L266.4 284.6M265.7 288.0L268.2 283.6M265.7 288.0L268.3 285.6M265.7 288.0L270.2 285.9M265.7 288.0L269.2 287.6" stroke="#f0f020" stroke-width="0.9"/><circle cx="265.7" cy="288.0" r="2.8" fill="#e8e820" stroke="#e8e820" stroke-width="0" /><path d="M301.3 301.3 L301.6 302.3 L301.5 303.3 L301.1 304.2 L300.3 304.9 L300.1 306.0 L299.5 306.8 L298.7 307.4 L297.6 307.6 L296.9 308.4 L296.0 308.8 L295.0 308.9 L294.0 308.6 L293.0 308.9 L292.0 308.8 L291.1 308.4 L290.4 307.6 L289.3 307.4 L288.5 306.8 L287.9 306.0 L287.7 304.9 L286.9 304.2 L286.5 303.3 L286.4 302.3 L286.7 301.3 L286.4 300.3 L286.5 299.3 L286.9 298.4 L287.7 297.7 L287.9 296.6 L288.5 295.8 L289.3 295.2 L290.4 295.0 L291.1 294.2 L292.0 293.8 L293.0 293.7 L294.0 294.0 L295.0 293.7 L296.0 293.8 L296.9 294.2 L297.6 295.0 L298.7 295.2 L299.5 295.8 L300.1 296.6 L300.3 297.7 L301.1 298.4 L301.5 299.3 L301.6 300.3 L301.3 301.3Z" fill="none" stroke="#902818" stroke-width="0.8" /><path d="M294.0 301.3L295.2 301.3M294.0 301.3L293.4 302.3M294.0 301.3L293.4 300.3" stroke="#902818" stroke-width="0.7"/><path d="M316.7 301.3 L317.0 302.3 L316.9 303.3 L316.5 304.2 L315.7 304.9 L315.5 306.0 L314.9 306.8 L314.1 307.4 L313.0 307.6 L312.3 308.4 L311.4 308.8 L310.4 308.9 L309.4 308.6 L308.4 308.9 L307.4 308.8 L306.5 308.4 L305.8 307.6 L304.7 307.4 L303.9 306.8 L303.3 306.0 L303.1 304.9 L302.3 304.2 L301.9 303.3 L301.8 302.3 L302.1 301.3 L301.8 300.3 L301.9 299.3 L302.3 298.4 L303.1 297.7 L303.3 296.6 L303.9 295.8 L304.7 295.2 L305.8 295.0 L306.5 294.2 L307.4 293.8 L308.4 293.7 L309.4 294.0 L310.4 293.7 L311.4 293.8 L312.3 294.2 L313.0 295.0 L314.1 295.2 L314.9 295.8 L315.5 296.6 L315.7 297.7 L316.5 298.4 L316.9 299.3 L317.0 300.3 L316.7 301.3Z" fill="none" stroke="#902818" stroke-width="0.8" /><path d="M309.4 301.3L310.6 301.3M309.4 301.3L308.8 302.3M309.4 301.3L308.8 300.3" stroke="#902818" stroke-width="0.7"/><path d="M325.0 303.2 L325.4 304.2 L325.4 305.1 L324.8 305.9 L323.8 306.4 L323.5 307.4 L322.9 308.1 L321.9 308.4 L320.9 308.1 L320.0 308.7 L319.0 308.8 L318.1 308.4 L317.5 307.5 L316.5 307.4 L315.6 306.9 L315.2 305.9 L315.3 304.9 L314.6 304.2 L314.3 303.2 L314.6 302.2 L315.3 301.5 L315.2 300.5 L315.6 299.5 L316.5 299.0 L317.5 298.9 L318.1 298.0 L319.0 297.6 L320.0 297.7 L320.9 298.3 L321.9 298.0 L322.9 298.3 L323.5 299.0 L323.8 300.0 L324.8 300.5 L325.4 301.3 L325.4 302.2 L325.0 303.2Z" fill="none" stroke="#1c9a78" stroke-width="0.8" /><circle cx="320.0" cy="303.2" r="0.5" fill="#1c9a78" stroke="#1c9a78" stroke-width="0.5" /><path d="M336.8 302.3 L337.2 303.4 L337.1 304.6 L336.4 305.5 L335.4 306.2 L335.0 307.3 L334.2 308.1 L333.0 308.4 L331.8 308.2 L330.8 308.8 L329.6 308.9 L328.6 308.4 L327.8 307.5 L326.6 307.3 L325.7 306.6 L325.2 305.5 L325.2 304.4 L324.4 303.4 L324.1 302.3 L324.4 301.2 L325.2 300.2 L325.2 299.1 L325.7 298.0 L326.6 297.3 L327.8 297.1 L328.6 296.2 L329.6 295.7 L330.8 295.8 L331.8 296.4 L333.0 296.2 L334.2 296.5 L335.0 297.3 L335.4 298.4 L336.4 299.1 L337.1 300.0 L337.2 301.2 L336.8 302.3Z" fill="none" stroke="#1c9a78" stroke-width="0.8" /><circle cx="330.8" cy="302.3" r="0.5" fill="#1c9a78" stroke="#1c9a78" stroke-width="0.5" /><path d="M339.0 303.0 L339.4 304.1 L339.3 305.3 L338.6 306.2 L337.6 306.9 L337.2 308.0 L336.4 308.8 L335.2 309.1 L334.0 308.9 L333.0 309.5 L331.8 309.6 L330.8 309.1 L330.0 308.2 L328.8 308.0 L327.9 307.3 L327.4 306.2 L327.4 305.1 L326.6 304.1 L326.3 303.0 L326.6 301.9 L327.4 300.9 L327.4 299.8 L327.9 298.7 L328.8 298.0 L330.0 297.8 L330.8 296.9 L331.8 296.4 L333.0 296.5 L334.0 297.1 L335.2 296.9 L336.4 297.2 L337.2 298.0 L337.6 299.1 L338.6 299.8 L339.3 300.7 L339.4 301.9 L339.0 303.0Z" fill="none" stroke="#1c9a78" stroke-width="0.8" /><circle cx="333.0" cy="303.0" r="0.5" fill="#1c9a78" stroke="#1c9a78" stroke-width="0.5" /><path d="M346.0 293.0 L346.4 294.1 L346.3 295.3 L345.6 296.2 L344.6 296.9 L344.2 298.0 L343.4 298.8 L342.2 299.1 L341.0 298.9 L340.0 299.5 L338.8 299.6 L337.8 299.1 L337.0 298.2 L335.8 298.0 L334.9 297.3 L334.4 296.2 L334.4 295.1 L333.6 294.1 L333.3 293.0 L333.6 291.9 L334.4 290.9 L334.4 289.8 L334.9 288.7 L335.8 288.0 L337.0 287.8 L337.8 286.9 L338.8 286.4 L340.0 286.5 L341.0 287.1 L342.2 286.9 L343.4 287.2 L344.2 288.0 L344.6 289.1 L345.6 289.8 L346.3 290.7 L346.4 291.9 L346.0 293.0Z" fill="none" stroke="#1c9a78" stroke-width="0.8" /><circle cx="340.0" cy="293.0" r="0.5" fill="#1c9a78" stroke="#1c9a78" stroke-width="0.5" /><path d="M356.0 302.0 L356.4 303.1 L356.3 304.3 L355.6 305.2 L354.6 305.9 L354.2 307.0 L353.4 307.8 L352.2 308.1 L351.0 307.9 L350.0 308.5 L348.8 308.6 L347.8 308.1 L347.0 307.2 L345.8 307.0 L344.9 306.3 L344.4 305.2 L344.4 304.1 L343.6 303.1 L343.3 302.0 L343.6 300.9 L344.4 299.9 L344.4 298.8 L344.9 297.7 L345.8 297.0 L347.0 296.8 L347.8 295.9 L348.8 295.4 L350.0 295.5 L351.0 296.1 L352.2 295.9 L353.4 296.2 L354.2 297.0 L354.6 298.1 L355.6 298.8 L356.3 299.7 L356.4 300.9 L356.0 302.0Z" fill="none" stroke="#1c9a78" stroke-width="0.8" /><circle cx="350.0" cy="302.0" r="0.5" fill="#1c9a78" stroke="#1c9a78" stroke-width="0.5" /><path d="M362.0 292.0 L362.4 293.5 L362.2 295.0 L361.4 296.2 L360.1 297.1 L359.5 298.5 L358.4 299.5 L356.9 300.0 L355.4 299.9 L354.0 300.5 L352.5 300.6 L351.1 300.0 L350.0 298.9 L348.5 298.5 L347.3 297.6 L346.6 296.2 L346.5 294.7 L345.6 293.5 L345.3 292.0 L345.6 290.5 L346.5 289.3 L346.6 287.8 L347.3 286.4 L348.5 285.5 L350.0 285.1 L351.1 284.0 L352.5 283.4 L354.0 283.5 L355.4 284.1 L356.9 284.0 L358.3 284.5 L359.5 285.5 L360.1 286.9 L361.4 287.8 L362.2 289.0 L362.4 290.5 L362.0 292.0Z" fill="none" stroke="#1c9a78" stroke-width="0.8" /><circle cx="354.0" cy="292.0" r="0.5" fill="#1c9a78" stroke="#1c9a78" stroke-width="0.5" /><path d="M368.0 304.0 L368.4 305.1 L368.3 306.3 L367.6 307.2 L366.6 307.9 L366.2 309.0 L365.4 309.8 L364.2 310.1 L363.0 309.9 L362.0 310.5 L360.8 310.6 L359.8 310.1 L359.0 309.2 L357.8 309.0 L356.9 308.3 L356.4 307.2 L356.4 306.1 L355.6 305.1 L355.3 304.0 L355.6 302.9 L356.4 301.9 L356.4 300.8 L356.9 299.7 L357.8 299.0 L359.0 298.8 L359.8 297.9 L360.8 297.4 L362.0 297.5 L363.0 298.1 L364.2 297.9 L365.4 298.2 L366.2 299.0 L366.6 300.1 L367.6 300.8 L368.3 301.7 L368.4 302.9 L368.0 304.0Z" fill="none" stroke="#1c9a78" stroke-width="0.8" /><circle cx="362.0" cy="304.0" r="0.5" fill="#1c9a78" stroke="#1c9a78" stroke-width="0.5" /><path d="M372.0 282.0 L372.4 283.1 L372.3 284.3 L371.6 285.2 L370.6 285.9 L370.2 287.0 L369.4 287.8 L368.2 288.1 L367.0 287.9 L366.0 288.5 L364.8 288.6 L363.8 288.1 L363.0 287.2 L361.8 287.0 L360.9 286.3 L360.4 285.2 L360.4 284.1 L359.6 283.1 L359.3 282.0 L359.6 280.9 L360.4 279.9 L360.4 278.8 L360.9 277.7 L361.8 277.0 L363.0 276.8 L363.8 275.9 L364.8 275.4 L366.0 275.5 L367.0 276.1 L368.2 275.9 L369.4 276.2 L370.2 277.0 L370.6 278.1 L371.6 278.8 L372.3 279.7 L372.4 280.9 L372.0 282.0Z" fill="none" stroke="#1c9a78" stroke-width="0.8" /><circle cx="366.0" cy="282.0" r="0.5" fill="#1c9a78" stroke="#1c9a78" stroke-width="0.5" /><path d="M374.0 292.0 L374.4 293.3 L374.2 294.6 L373.5 295.7 L372.4 296.5 L371.8 297.7 L370.9 298.7 L369.6 299.0 L368.2 298.9 L367.0 299.5 L365.7 299.6 L364.4 299.0 L363.5 298.1 L362.2 297.7 L361.1 296.9 L360.5 295.7 L360.4 294.4 L359.6 293.3 L359.3 292.0 L359.6 290.7 L360.4 289.6 L360.5 288.3 L361.1 287.1 L362.2 286.3 L363.5 285.9 L364.4 285.0 L365.7 284.4 L367.0 284.5 L368.2 285.1 L369.6 285.0 L370.9 285.3 L371.8 286.3 L372.4 287.5 L373.5 288.3 L374.2 289.4 L374.4 290.7 L374.0 292.0Z" fill="none" stroke="#1c9a78" stroke-width="0.8" /><circle cx="367.0" cy="292.0" r="0.5" fill="#1c9a78" stroke="#1c9a78" stroke-width="0.5" /><path d="M379.0 273.0 L379.4 274.3 L379.2 275.6 L378.5 276.7 L377.4 277.5 L376.8 278.7 L375.9 279.7 L374.6 280.0 L373.2 279.9 L372.0 280.5 L370.7 280.6 L369.4 280.0 L368.5 279.1 L367.2 278.7 L366.1 277.9 L365.5 276.7 L365.4 275.4 L364.6 274.3 L364.3 273.0 L364.6 271.7 L365.4 270.6 L365.5 269.3 L366.1 268.1 L367.2 267.3 L368.5 266.9 L369.4 266.0 L370.7 265.4 L372.0 265.5 L373.2 266.1 L374.6 266.0 L375.9 266.3 L376.8 267.3 L377.4 268.5 L378.5 269.3 L379.2 270.4 L379.4 271.7 L379.0 273.0Z" fill="none" stroke="#1c9a78" stroke-width="0.8" /><circle cx="372.0" cy="273.0" r="0.5" fill="#1c9a78" stroke="#1c9a78" stroke-width="0.5" /><path d="M384.0 278.0 L384.4 279.1 L384.3 280.3 L383.6 281.2 L382.6 281.9 L382.2 283.0 L381.4 283.8 L380.2 284.1 L379.0 283.9 L378.0 284.5 L376.8 284.6 L375.8 284.1 L375.0 283.2 L373.8 283.0 L372.9 282.3 L372.4 281.2 L372.4 280.1 L371.6 279.1 L371.3 278.0 L371.6 276.9 L372.4 275.9 L372.4 274.8 L372.9 273.7 L373.8 273.0 L375.0 272.8 L375.8 271.9 L376.8 271.4 L378.0 271.5 L379.0 272.1 L380.2 271.9 L381.4 272.2 L382.2 273.0 L382.6 274.1 L383.6 274.8 L384.3 275.7 L384.4 276.9 L384.0 278.0Z" fill="none" stroke="#1c9a78" stroke-width="0.8" /><circle cx="378.0" cy="278.0" r="0.5" fill="#1c9a78" stroke="#1c9a78" stroke-width="0.5" /><path d="M395.0 273.0 L395.4 274.1 L395.3 275.3 L394.6 276.2 L393.6 276.9 L393.2 278.0 L392.4 278.8 L391.2 279.1 L390.0 278.9 L389.0 279.5 L387.8 279.6 L386.8 279.1 L386.0 278.2 L384.8 278.0 L383.9 277.3 L383.4 276.2 L383.4 275.1 L382.6 274.1 L382.3 273.0 L382.6 271.9 L383.4 270.9 L383.4 269.8 L383.9 268.7 L384.8 268.0 L386.0 267.8 L386.8 266.9 L387.8 266.4 L389.0 266.5 L390.0 267.1 L391.2 266.9 L392.4 267.2 L393.2 268.0 L393.6 269.1 L394.6 269.8 L395.3 270.7 L395.4 271.9 L395.0 273.0Z" fill="none" stroke="#1c9a78" stroke-width="0.8" /><circle cx="389.0" cy="273.0" r="0.5" fill="#1c9a78" stroke="#1c9a78" stroke-width="0.5" /><path d="M404.2 262.0 L404.6 263.3 L404.4 264.6 L403.7 265.7 L402.6 266.5 L402.0 267.7 L401.1 268.7 L399.8 269.0 L398.4 268.9 L397.2 269.5 L395.9 269.6 L394.6 269.0 L393.7 268.1 L392.4 267.7 L391.3 266.9 L390.7 265.7 L390.6 264.4 L389.8 263.3 L389.5 262.0 L389.8 260.7 L390.6 259.6 L390.7 258.3 L391.3 257.1 L392.4 256.3 L393.7 255.9 L394.6 255.0 L395.9 254.4 L397.2 254.5 L398.4 255.1 L399.8 255.0 L401.1 255.3 L402.0 256.3 L402.6 257.5 L403.7 258.3 L404.4 259.4 L404.6 260.7 L404.2 262.0Z" fill="none" stroke="#1c9a78" stroke-width="0.8" /><circle cx="397.2" cy="262.0" r="0.5" fill="#1c9a78" stroke="#1c9a78" stroke-width="0.5" /><path d="M405.2 276.0 L405.6 277.1 L405.5 278.3 L404.8 279.2 L403.8 279.9 L403.4 281.0 L402.6 281.8 L401.4 282.1 L400.2 281.9 L399.2 282.5 L398.0 282.6 L397.0 282.1 L396.2 281.2 L395.0 281.0 L394.1 280.3 L393.6 279.2 L393.6 278.1 L392.8 277.1 L392.5 276.0 L392.8 274.9 L393.6 273.9 L393.6 272.8 L394.1 271.7 L395.0 271.0 L396.2 270.8 L397.0 269.9 L398.0 269.4 L399.2 269.5 L400.2 270.1 L401.4 269.9 L402.6 270.2 L403.4 271.0 L403.8 272.1 L404.8 272.8 L405.5 273.7 L405.6 274.9 L405.2 276.0Z" fill="none" stroke="#1c9a78" stroke-width="0.8" /><circle cx="399.2" cy="276.0" r="0.5" fill="#1c9a78" stroke="#1c9a78" stroke-width="0.5" /><path d="M389.0 284.0 L389.4 285.0 L389.4 285.9 L388.8 286.7 L387.8 287.2 L387.5 288.2 L386.9 288.9 L385.9 289.2 L384.9 288.9 L384.0 289.5 L383.0 289.6 L382.1 289.2 L381.5 288.3 L380.5 288.2 L379.6 287.7 L379.2 286.7 L379.3 285.7 L378.6 285.0 L378.3 284.0 L378.6 283.0 L379.3 282.3 L379.2 281.3 L379.6 280.3 L380.5 279.8 L381.5 279.7 L382.1 278.8 L383.0 278.4 L384.0 278.5 L384.9 279.1 L385.9 278.8 L386.9 279.1 L387.5 279.8 L387.8 280.8 L388.8 281.3 L389.4 282.1 L389.4 283.0 L389.0 284.0Z" fill="none" stroke="#1c9a78" stroke-width="0.8" /><circle cx="384.0" cy="284.0" r="0.5" fill="#1c9a78" stroke="#1c9a78" stroke-width="0.5" /><circle cx="391.0" cy="294.2" r="17.0" fill="none" stroke="#7a7a20" stroke-width="0.9" /><circle cx="391.0" cy="294.2" r="0.8" fill="#7a7a20" stroke="#7a7a20" stroke-width="0.5" /><path d="M394.1 254.0 L394.5 255.7 L394.3 257.4 L393.4 258.8 L392.0 259.8 L391.2 261.3 L390.0 262.5 L388.4 263.0 L386.7 262.9 L385.1 263.6 L383.4 263.7 L381.8 263.0 L380.6 261.8 L379.0 261.3 L377.6 260.3 L376.8 258.8 L376.6 257.1 L375.7 255.7 L375.3 254.0 L375.7 252.3 L376.6 250.9 L376.8 249.2 L377.6 247.7 L379.0 246.7 L380.6 246.2 L381.8 245.0 L383.4 244.3 L385.1 244.4 L386.7 245.1 L388.4 245.0 L390.0 245.5 L391.2 246.7 L392.0 248.2 L393.4 249.2 L394.3 250.6 L394.5 252.3 L394.1 254.0Z" fill="none" stroke="#d8d020" stroke-width="0.9" /><circle cx="385.1" cy="254.0" r="0.8" fill="#d8d020" stroke="#d8d020" stroke-width="0.5" /><path d="M405.2 247.0 L405.7 248.1 L405.6 249.3 L404.9 250.3 L403.8 250.9 L403.4 252.0 L402.6 252.9 L401.4 253.2 L400.2 252.9 L399.2 253.6 L398.0 253.7 L397.0 253.2 L396.2 252.2 L395.0 252.0 L394.0 251.4 L393.5 250.3 L393.6 249.1 L392.7 248.1 L392.4 247.0 L392.7 245.9 L393.6 244.9 L393.5 243.7 L394.0 242.6 L395.0 242.0 L396.2 241.8 L397.0 240.8 L398.0 240.3 L399.2 240.4 L400.2 241.1 L401.4 240.8 L402.6 241.1 L403.4 242.0 L403.8 243.1 L404.9 243.7 L405.6 244.7 L405.7 245.9 L405.2 247.0Z" fill="none" stroke="#d8d020" stroke-width="0.9" /><circle cx="399.2" cy="247.0" r="0.8" fill="#d8d020" stroke="#d8d020" stroke-width="0.5" /><path d="M406.2 255.0 L406.7 256.1 L406.6 257.3 L405.9 258.3 L404.8 258.9 L404.4 260.0 L403.6 260.9 L402.4 261.2 L401.2 260.9 L400.2 261.6 L399.0 261.7 L398.0 261.2 L397.2 260.2 L396.0 260.0 L395.0 259.4 L394.5 258.3 L394.6 257.1 L393.7 256.1 L393.4 255.0 L393.7 253.9 L394.6 252.9 L394.5 251.7 L395.0 250.6 L396.0 250.0 L397.2 249.8 L398.0 248.8 L399.0 248.3 L400.2 248.4 L401.2 249.1 L402.4 248.8 L403.6 249.1 L404.4 250.0 L404.8 251.1 L405.9 251.7 L406.6 252.7 L406.7 253.9 L406.2 255.0Z" fill="none" stroke="#d8d020" stroke-width="0.9" /><circle cx="400.2" cy="255.0" r="0.8" fill="#d8d020" stroke="#d8d020" stroke-width="0.5" /><path d="M389.1 266.1 L389.6 267.2 L389.5 268.4 L388.8 269.4 L387.7 270.0 L387.3 271.1 L386.5 272.0 L385.3 272.3 L384.1 272.0 L383.1 272.7 L381.9 272.8 L380.9 272.3 L380.1 271.3 L378.9 271.1 L377.9 270.5 L377.4 269.4 L377.5 268.2 L376.6 267.2 L376.3 266.1 L376.6 265.0 L377.5 264.0 L377.4 262.8 L377.9 261.7 L378.9 261.1 L380.1 260.9 L380.9 259.9 L381.9 259.4 L383.1 259.5 L384.1 260.2 L385.3 259.9 L386.5 260.2 L387.3 261.1 L387.7 262.2 L388.8 262.8 L389.5 263.8 L389.6 265.0 L389.1 266.1Z" fill="none" stroke="#d8d020" stroke-width="0.9" /><circle cx="383.1" cy="266.1" r="0.8" fill="#d8d020" stroke="#d8d020" stroke-width="0.5" /><path d="M393.2 235.0L405.9 237.6M393.2 235.0L401.6 238.5M393.2 235.0L404.0 242.3M393.2 235.0L399.6 241.5M393.2 235.0L400.4 245.8M393.2 235.0L396.7 243.4M393.2 235.0L395.7 247.8M393.2 235.0L393.2 244.1M393.2 235.0L390.6 247.7M393.2 235.0L389.7 243.4M393.2 235.0L385.9 245.8M393.2 235.0L386.7 241.4M393.2 235.0L382.4 242.2M393.2 235.0L384.8 238.5M393.2 235.0L380.4 237.5M393.2 235.0L384.1 235.0M393.2 235.0L380.5 232.4M393.2 235.0L384.8 231.5M393.2 235.0L382.4 227.7M393.2 235.0L386.8 228.5M393.2 235.0L386.0 224.2M393.2 235.0L389.7 226.6M393.2 235.0L390.7 222.2M393.2 235.0L393.2 225.9M393.2 235.0L395.8 222.3M393.2 235.0L396.7 226.6M393.2 235.0L400.5 224.2M393.2 235.0L399.7 228.6M393.2 235.0L404.0 227.8M393.2 235.0L401.6 231.5M393.2 235.0L406.0 232.5M393.2 235.0L402.3 235.0" stroke="#c84838" stroke-width="0.55"/><path d="M393.2 235.0L398.1 236.0M393.2 235.0L395.8 237.3M393.2 235.0L394.8 239.7M393.2 235.0L392.5 238.4M393.2 235.0L389.9 238.7M393.2 235.0L389.9 236.1M393.2 235.0L388.3 234.0M393.2 235.0L390.6 232.7M393.2 235.0L391.6 230.3M393.2 235.0L393.9 231.6M393.2 235.0L396.5 231.3M393.2 235.0L396.5 233.9" stroke="#e0a080" stroke-width="0.6"/><circle cx="393.2" cy="235.0" r="1.8" fill="#a0e090" stroke="#a0e090" stroke-width="0" /><polygon points="405.7,189.0 404.6,189.9 405.2,191.3 403.8,191.6 403.7,193.1 402.3,192.7 401.7,194.1 400.5,193.2 399.3,194.1 398.7,192.7 397.3,193.1 397.2,191.6 395.8,191.3 396.4,189.9 395.3,189.0 396.4,188.1 395.8,186.7 397.2,186.4 397.3,184.9 398.7,185.3 399.3,183.9 400.5,184.8 401.7,183.9 402.3,185.3 403.7,184.9 403.8,186.4 405.2,186.7 404.6,188.1" fill="none" stroke="#b8d860" stroke-width="0.9"/><circle cx="400.5" cy="189.0" r="3.0" fill="#90b040" stroke="#90b040" stroke-width="0" /><polygon points="405.7,205.7 404.6,206.6 405.2,208.0 403.8,208.3 403.7,209.8 402.3,209.4 401.7,210.8 400.5,209.9 399.3,210.8 398.7,209.4 397.3,209.8 397.2,208.3 395.8,208.0 396.4,206.6 395.3,205.7 396.4,204.8 395.8,203.4 397.2,203.1 397.3,201.6 398.7,202.0 399.3,200.6 400.5,201.5 401.7,200.6 402.3,202.0 403.7,201.6 403.8,203.1 405.2,203.4 404.6,204.8" fill="none" stroke="#b8d860" stroke-width="0.9"/><circle cx="400.5" cy="205.7" r="3.0" fill="#90b040" stroke="#90b040" stroke-width="0" /><polygon points="405.7,219.0 404.6,219.9 405.2,221.3 403.8,221.6 403.7,223.1 402.3,222.7 401.7,224.1 400.5,223.2 399.3,224.1 398.7,222.7 397.3,223.1 397.2,221.6 395.8,221.3 396.4,219.9 395.3,219.0 396.4,218.1 395.8,216.7 397.2,216.4 397.3,214.9 398.7,215.3 399.3,213.9 400.5,214.8 401.7,213.9 402.3,215.3 403.7,214.9 403.8,216.4 405.2,216.7 404.6,218.1" fill="none" stroke="#b8d860" stroke-width="0.9"/><circle cx="400.5" cy="219.0" r="3.0" fill="#90b040" stroke="#90b040" stroke-width="0" /><path d="M410.0 132.5 L410.5 134.0 L409.2 135.2 L409.5 136.7 L409.7 138.2 L408.0 139.1 L408.0 140.6 L407.8 142.2 L406.0 142.6 L405.6 144.1 L405.0 145.6 L403.2 145.6 L402.4 146.9 L401.6 148.2 L399.7 147.8 L398.7 148.9 L397.5 149.9 L395.9 149.1 L394.6 149.9 L393.2 150.6 L391.8 149.4 L390.4 149.9 L388.9 150.2 L387.8 148.7 L386.3 148.9 L384.7 148.9 L384.1 147.1 L382.6 146.9 L381.0 146.5 L380.8 144.7 L379.4 144.1 L378.0 143.4 L378.2 141.5 L377.0 140.6 L375.8 139.6 L376.5 137.8 L375.5 136.7 L374.6 135.4 L375.7 133.9 L375.0 132.5 L374.5 131.0 L375.8 129.8 L375.5 128.3 L375.3 126.8 L377.0 125.9 L377.0 124.4 L377.2 122.8 L379.0 122.4 L379.4 120.9 L380.0 119.4 L381.8 119.4 L382.6 118.1 L383.4 116.8 L385.3 117.2 L386.3 116.1 L387.5 115.1 L389.1 115.9 L390.4 115.1 L391.8 114.4 L393.2 115.6 L394.6 115.1 L396.1 114.8 L397.2 116.3 L398.7 116.1 L400.3 116.1 L400.9 117.9 L402.4 118.1 L404.0 118.5 L404.2 120.3 L405.6 120.9 L407.0 121.6 L406.8 123.5 L408.0 124.4 L409.2 125.4 L408.5 127.2 L409.5 128.3 L410.4 129.6 L409.3 131.1 L410.0 132.5Z" fill="none" stroke="#28c8d0" stroke-width="1.2"/><circle cx="408.2" cy="130.2" r="2.0" fill="none" stroke="#28c8d0" stroke-width="0.7" /><circle cx="404.1" cy="143.4" r="2.1" fill="none" stroke="#28c8d0" stroke-width="0.7" /><circle cx="400.7" cy="146.1" r="2.2" fill="none" stroke="#28c8d0" stroke-width="0.7" /><circle cx="391.7" cy="148.4" r="1.9" fill="none" stroke="#28c8d0" stroke-width="0.7" /><circle cx="381.8" cy="144.2" r="2.0" fill="none" stroke="#28c8d0" stroke-width="0.7" /><circle cx="376.7" cy="133.6" r="1.9" fill="none" stroke="#28c8d0" stroke-width="0.7" /><circle cx="379.2" cy="123.9" r="1.7" fill="none" stroke="#28c8d0" stroke-width="0.7" /><circle cx="386.5" cy="117.8" r="2.1" fill="none" stroke="#28c8d0" stroke-width="0.7" /><circle cx="398.4" cy="117.7" r="1.8" fill="none" stroke="#28c8d0" stroke-width="0.7" /><circle cx="405.7" cy="123.7" r="1.5" fill="none" stroke="#28c8d0" stroke-width="0.7" /><path d="M375.8 126.4A17.8 17.8 0 0 1 406.1 121.1" fill="none" stroke="#9a94a8" stroke-width="1.6" stroke-dasharray="1.4 0.6"/><path d="M392 133L380 124M392 133L399 116M392 133L408 128M392 133L400 148M392 133L381 146M380 124L376 135L381 146M399 116L408 128" fill="none" stroke="#28c8d0" stroke-width="0.8"/><path d="M370.0 133.6L386.4 135.3M369.9 134.2L379.3 138.7M369.5 134.6L381.1 146.4M369.1 134.9L373.4 144.4M368.6 135.0L369.8 151.5M368.1 134.9L365.2 145.1M367.6 134.7L358.0 148.1M367.3 134.3L358.6 140.3M367.0 133.9L351.1 137.9M367.0 133.4L356.6 132.3M367.1 132.8L352.3 125.7M367.5 132.4L360.1 124.9M367.9 132.1L361.1 117.1M368.4 132.0L367.6 121.5M368.9 132.1L373.4 116.2M369.4 132.3L375.5 123.8M369.7 132.7L383.4 123.4M370.0 133.1L380.1 130.5" stroke="#d8d890" stroke-width="0.65"/><circle cx="368.5" cy="133.5" r="2.2" fill="#e8e8a0" stroke="#e8e8a0" stroke-width="0" /><path d="M353.7 138.5L349.3 138.5L349.4 142.6L346.8 139.7L343.0 143.3L343.8 138.6L338.9 137.6L343.0 135.2L341.9 131.7L345.6 132.8L347.6 128.9L348.4 133.9L352.6 132.6L350.4 135.9L353.7 138.5Z" fill="#0a700e" stroke="#28b028" stroke-width="0.7" stroke-linejoin="round"/><circle cx="347.3" cy="133.6" r="2.2" fill="#0a6a0e" stroke="#30b030" stroke-width="0.4" /><circle cx="345.0" cy="134.4" r="2.2" fill="#0a6a0e" stroke="#30b030" stroke-width="0.4" /><circle cx="347.4" cy="139.2" r="2.2" fill="#0a6a0e" stroke="#30b030" stroke-width="0.4" /><path d="M349.2 147.9L345.1 148.4L344.7 151.9L342.1 148.4L339.3 151.0L340.0 147.4L335.9 146.8L339.9 145.0L338.1 141.9L341.4 143.4L342.9 138.5L343.7 143.4L347.3 142.4L344.9 145.4L349.2 147.9Z" fill="#0a700e" stroke="#28b028" stroke-width="0.7" stroke-linejoin="round"/><circle cx="340.7" cy="143.9" r="2.0" fill="#0a6a0e" stroke="#30b030" stroke-width="0.4" /><circle cx="340.4" cy="147.3" r="2.0" fill="#0a6a0e" stroke="#30b030" stroke-width="0.4" /><circle cx="341.8" cy="143.4" r="2.0" fill="#0a6a0e" stroke="#30b030" stroke-width="0.4" /><path d="M366.0 149.8L362.2 150.5L362.3 155.6L358.9 151.7L355.2 154.5L356.8 149.3L351.0 148.9L356.4 146.8L354.0 142.9L358.0 144.6L359.8 139.1L361.3 144.0L366.2 142.9L362.4 147.2L366.0 149.8Z" fill="#0a700e" stroke="#28b028" stroke-width="0.7" stroke-linejoin="round"/><circle cx="361.8" cy="146.6" r="2.2" fill="#0a6a0e" stroke="#30b030" stroke-width="0.4" /><circle cx="356.7" cy="146.4" r="2.2" fill="#0a6a0e" stroke="#30b030" stroke-width="0.4" /><circle cx="357.0" cy="146.0" r="2.2" fill="#0a6a0e" stroke="#30b030" stroke-width="0.4" /><path d="M369.8 164.0L365.8 164.5L365.7 168.8L362.7 165.2L358.8 169.2L359.8 164.1L354.9 163.1L359.9 160.9L358.0 157.2L361.8 158.9L363.6 153.9L365.2 158.1L369.7 157.3L366.6 161.4L369.8 164.0Z" fill="#0a700e" stroke="#28b028" stroke-width="0.7" stroke-linejoin="round"/><circle cx="360.3" cy="161.3" r="2.2" fill="#0a6a0e" stroke="#30b030" stroke-width="0.4" /><circle cx="365.2" cy="163.7" r="2.2" fill="#0a6a0e" stroke="#30b030" stroke-width="0.4" /><circle cx="361.7" cy="159.4" r="2.2" fill="#0a6a0e" stroke="#30b030" stroke-width="0.4" /><path d="M351.5 166.7L347.6 167.1L347.6 171.3L344.8 167.8L341.6 170.6L342.0 166.8L338.0 165.7L342.5 163.9L340.9 160.9L344.1 162.4L345.5 158.5L346.3 162.5L351.0 160.6L348.1 164.2L351.5 166.7Z" fill="#0a700e" stroke="#28b028" stroke-width="0.7" stroke-linejoin="round"/><circle cx="345.8" cy="167.0" r="2.0" fill="#0a6a0e" stroke="#30b030" stroke-width="0.4" /><circle cx="346.9" cy="163.2" r="2.0" fill="#0a6a0e" stroke="#30b030" stroke-width="0.4" /><circle cx="343.3" cy="163.0" r="2.0" fill="#0a6a0e" stroke="#30b030" stroke-width="0.4" /><circle cx="315.3" cy="172.8" r="6.0" fill="none" stroke="#e0d020" stroke-width="1.1" /><circle cx="315.3" cy="172.8" r="0.9" fill="#e0d020" stroke="#e0d020" stroke-width="0" /><circle cx="326.2" cy="175.1" r="6.0" fill="none" stroke="#e0d020" stroke-width="1.1" /><circle cx="326.2" cy="175.1" r="0.9" fill="#e0d020" stroke="#e0d020" stroke-width="0" /><circle cx="337.9" cy="175.5" r="6.0" fill="none" stroke="#e0d020" stroke-width="1.1" /><circle cx="337.9" cy="175.5" r="0.9" fill="#e0d020" stroke="#e0d020" stroke-width="0" /><circle cx="349.1" cy="191.0" r="11.6" fill="none" stroke="#e0d020" stroke-width="1.2" /><path d="M349.1 179.4V191M349.1 191L341 199.5M349.1 191L357.5 199" stroke="#e0d020" stroke-width="1.1"/><polygon points="311.7,129.8 309.6,131.5 310.8,133.9 308.2,134.5 308.2,137.1 305.6,136.6 304.4,139.0 302.3,137.3 300.2,139.0 299.0,136.6 296.4,137.1 296.4,134.5 293.8,133.9 295.0,131.5 292.9,129.8 295.0,128.1 293.8,125.7 296.4,125.1 296.4,122.5 299.0,123.0 300.2,120.6 302.3,122.3 304.4,120.6 305.6,123.0 308.2,122.5 308.2,125.1 310.8,125.7 309.6,128.1" fill="none" stroke="#1e9a3a" stroke-width="1.0"/><circle cx="302.3" cy="129.8" r="7.5" fill="none" stroke="#7a8a30" stroke-width="0.6" /><circle cx="302.2" cy="121.2" r="0.6" fill="#30c8b8" stroke="#30c8b8" stroke-width="0" /><circle cx="292.8" cy="126.3" r="0.6" fill="#30c8b8" stroke="#30c8b8" stroke-width="0" /><circle cx="293.4" cy="131.0" r="0.6" fill="#30c8b8" stroke="#30c8b8" stroke-width="0" /><circle cx="310.0" cy="130.0" r="0.6" fill="#30c8b8" stroke="#30c8b8" stroke-width="0" /><circle cx="305.3" cy="120.9" r="0.6" fill="#30c8b8" stroke="#30c8b8" stroke-width="0" /><circle cx="293.7" cy="129.9" r="0.6" fill="#30c8b8" stroke="#30c8b8" stroke-width="0" /><circle cx="309.1" cy="124.1" r="0.6" fill="#30c8b8" stroke="#30c8b8" stroke-width="0" /><circle cx="308.8" cy="125.2" r="0.6" fill="#30c8b8" stroke="#30c8b8" stroke-width="0" /><circle cx="296.4" cy="124.6" r="0.6" fill="#30c8b8" stroke="#30c8b8" stroke-width="0" /><circle cx="303.8" cy="119.6" r="0.6" fill="#30c8b8" stroke="#30c8b8" stroke-width="0" /><circle cx="306.6" cy="121.0" r="0.6" fill="#30c8b8" stroke="#30c8b8" stroke-width="0" /><circle cx="299.3" cy="120.5" r="0.6" fill="#30c8b8" stroke="#30c8b8" stroke-width="0" /><circle cx="294.1" cy="128.0" r="0.6" fill="#30c8b8" stroke="#30c8b8" stroke-width="0" /><circle cx="309.0" cy="122.8" r="0.6" fill="#30c8b8" stroke="#30c8b8" stroke-width="0" /><circle cx="301.0" cy="122.1" r="0.6" fill="#30c8b8" stroke="#30c8b8" stroke-width="0" /><circle cx="296.8" cy="123.8" r="0.6" fill="#30c8b8" stroke="#30c8b8" stroke-width="0" /><circle cx="296.0" cy="122.1" r="0.6" fill="#30c8b8" stroke="#30c8b8" stroke-width="0" /><circle cx="293.8" cy="124.2" r="0.6" fill="#30c8b8" stroke="#30c8b8" stroke-width="0" /><circle cx="310.0" cy="129.4" r="0.6" fill="#30c8b8" stroke="#30c8b8" stroke-width="0" /><circle cx="299.4" cy="121.3" r="0.6" fill="#30c8b8" stroke="#30c8b8" stroke-width="0" /><circle cx="293.5" cy="130.4" r="0.6" fill="#30c8b8" stroke="#30c8b8" stroke-width="0" /><circle cx="310.1" cy="130.2" r="0.6" fill="#30c8b8" stroke="#30c8b8" stroke-width="0" /><polygon points="291.3,136.4 289.8,138.0 289.9,140.3 287.7,140.6 286.3,142.3 284.5,141.1 282.3,141.6 281.6,139.5 279.7,138.5 280.5,136.4 279.7,134.3 281.6,133.3 282.3,131.2 284.5,131.7 286.3,130.5 287.7,132.2 289.9,132.5 289.8,134.8" fill="none" stroke="#1a7a1a" stroke-width="0.8"/><circle cx="285.3" cy="136.4" r="0.5" fill="#1a7a1a" stroke="#1a7a1a" stroke-width="0.5" /><polygon points="283.4,146.8 281.9,148.4 282.0,150.7 279.8,151.0 278.4,152.7 276.6,151.5 274.4,152.0 273.7,149.9 271.8,148.9 272.6,146.8 271.8,144.7 273.7,143.7 274.4,141.6 276.6,142.1 278.4,140.9 279.8,142.6 282.0,142.9 281.9,145.2" fill="none" stroke="#1a7a1a" stroke-width="0.8"/><circle cx="277.4" cy="146.8" r="0.5" fill="#1a7a1a" stroke="#1a7a1a" stroke-width="0.5" /><polygon points="285.6,157.2 284.1,158.8 284.2,161.1 282.0,161.4 280.6,163.1 278.8,161.9 276.6,162.4 275.9,160.3 274.0,159.3 274.8,157.2 274.0,155.1 275.9,154.1 276.6,152.0 278.8,152.5 280.6,151.3 282.0,153.0 284.2,153.3 284.1,155.6" fill="none" stroke="#1a7a1a" stroke-width="0.8"/><circle cx="279.6" cy="157.2" r="0.5" fill="#1a7a1a" stroke="#1a7a1a" stroke-width="0.5" /><polygon points="302.2,149.6 300.6,151.4 300.7,153.8 298.3,154.1 296.8,156.0 294.8,154.7 292.4,155.2 291.7,152.9 289.6,151.8 290.5,149.6 289.6,147.4 291.7,146.3 292.4,144.0 294.8,144.5 296.8,143.2 298.3,145.1 300.7,145.4 300.6,147.8" fill="none" stroke="#1a8a3a" stroke-width="0.8"/><circle cx="295.7" cy="149.6" r="0.5" fill="#1a8a3a" stroke="#1a8a3a" stroke-width="0.5" /><polygon points="309.0,176.0 307.4,177.8 307.5,180.2 305.1,180.5 303.6,182.4 301.6,181.1 299.2,181.6 298.5,179.3 296.4,178.2 297.3,176.0 296.4,173.8 298.5,172.7 299.2,170.4 301.6,170.9 303.6,169.6 305.1,171.5 307.5,171.8 307.4,174.2" fill="none" stroke="#1a7a1a" stroke-width="0.8"/><circle cx="302.5" cy="176.0" r="0.5" fill="#1a7a1a" stroke="#1a7a1a" stroke-width="0.5" /><polygon points="282.0,196.8 280.5,198.4 280.6,200.7 278.4,201.0 277.0,202.7 275.2,201.5 273.0,202.0 272.3,199.9 270.4,198.9 271.2,196.8 270.4,194.7 272.3,193.7 273.0,191.6 275.2,192.1 277.0,190.9 278.4,192.6 280.6,192.9 280.5,195.2" fill="none" stroke="#1a7a1a" stroke-width="0.8"/><circle cx="276.0" cy="196.8" r="0.5" fill="#1a7a1a" stroke="#1a7a1a" stroke-width="0.5" /><polygon points="282.0,208.0 280.5,209.6 280.6,211.9 278.4,212.2 277.0,213.9 275.2,212.7 273.0,213.2 272.3,211.1 270.4,210.1 271.2,208.0 270.4,205.9 272.3,204.9 273.0,202.8 275.2,203.3 277.0,202.1 278.4,203.8 280.6,204.1 280.5,206.4" fill="none" stroke="#1a7a1a" stroke-width="0.8"/><circle cx="276.0" cy="208.0" r="0.5" fill="#1a7a1a" stroke="#1a7a1a" stroke-width="0.5" /><polygon points="282.0,220.0 280.5,221.6 280.6,223.9 278.4,224.2 277.0,225.9 275.2,224.7 273.0,225.2 272.3,223.1 270.4,222.1 271.2,220.0 270.4,217.9 272.3,216.9 273.0,214.8 275.2,215.3 277.0,214.1 278.4,215.8 280.6,216.1 280.5,218.4" fill="none" stroke="#1a7a1a" stroke-width="0.8"/><circle cx="276.0" cy="220.0" r="0.5" fill="#1a7a1a" stroke="#1a7a1a" stroke-width="0.5" /><polygon points="257.5,187.5 255.9,189.1 256.4,191.3 254.2,191.7 253.4,193.9 251.3,193.0 249.5,194.4 248.2,192.6 245.9,192.8 245.8,190.5 243.8,189.5 244.9,187.5 243.8,185.5 245.8,184.5 245.9,182.2 248.2,182.4 249.5,180.6 251.3,182.0 253.4,181.1 254.2,183.3 256.4,183.7 255.9,185.9" fill="none" stroke="#20a050" stroke-width="0.9"/><path d="M244.5 184A7 7 0 0 1 256 183.5" fill="none" stroke="#30b8a8" stroke-width="1.2" stroke-dasharray="1 0.8"/><circle cx="327.0" cy="205.0" r="6.0" fill="none" stroke="#18a0a0" stroke-width="1" stroke-dasharray="0.9 0.6"/><circle cx="327.0" cy="205.0" r="4.0" fill="none" stroke="#18a0a0" stroke-width="0.9" stroke-dasharray="0.9 0.6"/><circle cx="327.0" cy="205.0" r="2.0" fill="none" stroke="#18a0a0" stroke-width="0.9" stroke-dasharray="0.9 0.6"/><circle cx="335.0" cy="201.0" r="6.0" fill="none" stroke="#18a0a0" stroke-width="1" stroke-dasharray="0.9 0.6"/><circle cx="335.0" cy="201.0" r="4.0" fill="none" stroke="#18a0a0" stroke-width="0.9" stroke-dasharray="0.9 0.6"/><circle cx="335.0" cy="201.0" r="2.0" fill="none" stroke="#18a0a0" stroke-width="0.9" stroke-dasharray="0.9 0.6"/><circle cx="335.0" cy="214.0" r="7.0" fill="none" stroke="#18a0a0" stroke-width="1" stroke-dasharray="0.9 0.6"/><circle cx="335.0" cy="214.0" r="4.6" fill="none" stroke="#18a0a0" stroke-width="0.9" stroke-dasharray="0.9 0.6"/><circle cx="335.0" cy="214.0" r="2.3" fill="none" stroke="#18a0a0" stroke-width="0.9" stroke-dasharray="0.9 0.6"/><polygon points="361.0,210.0 359.3,211.7 359.7,214.1 357.3,214.5 356.2,216.7 354.0,215.6 351.8,216.7 350.7,214.5 348.3,214.1 348.7,211.7 347.0,210.0 348.7,208.3 348.3,205.9 350.7,205.5 351.8,203.3 354.0,204.4 356.2,203.3 357.3,205.5 359.7,205.9 359.3,208.3" fill="none" stroke="#8070a0" stroke-width="0.8"/><circle cx="358.0" cy="210.0" r="0.8" fill="#30a040" stroke="#30a040" stroke-width="0" /><circle cx="356.0" cy="213.5" r="0.8" fill="#30a040" stroke="#30a040" stroke-width="0" /><circle cx="352.0" cy="213.5" r="0.8" fill="#30a040" stroke="#30a040" stroke-width="0" /><circle cx="350.0" cy="210.0" r="0.8" fill="#30a040" stroke="#30a040" stroke-width="0" /><circle cx="352.0" cy="206.5" r="0.8" fill="#30a040" stroke="#30a040" stroke-width="0" /><circle cx="356.0" cy="206.5" r="0.8" fill="#30a040" stroke="#30a040" stroke-width="0" /><path d="M321.0 220.0L327.9 221.4M321.0 220.0L325.3 222.4M321.0 220.0L325.7 225.2M321.0 220.0L323.0 224.5M321.0 220.0L321.8 227.0M321.0 220.0L320.0 224.8M321.0 220.0L317.6 226.1M321.0 220.0L317.4 223.3M321.0 220.0L314.6 222.9M321.0 220.0L316.1 220.6M321.0 220.0L314.1 218.6M321.0 220.0L316.7 217.6M321.0 220.0L316.3 214.8M321.0 220.0L319.0 215.5M321.0 220.0L320.2 213.0M321.0 220.0L322.0 215.2M321.0 220.0L324.4 213.9M321.0 220.0L324.6 216.7M321.0 220.0L327.4 217.1M321.0 220.0L325.9 219.4" stroke="#c0e0a0" stroke-width="0.6"/><circle cx="321.0" cy="220.0" r="3.0" fill="#30b0b0" stroke="#20a0a0" stroke-width="0" /><circle cx="330.0" cy="223.0" r="4.0" fill="none" stroke="#127a60" stroke-width="0.8" /><circle cx="339.0" cy="225.0" r="4.0" fill="none" stroke="#127a60" stroke-width="0.8" /><circle cx="343.0" cy="233.0" r="4.0" fill="none" stroke="#127a60" stroke-width="0.8" /><circle cx="336.0" cy="262.0" r="4.0" fill="none" stroke="#127a60" stroke-width="0.8" /><circle cx="336.0" cy="270.0" r="4.0" fill="none" stroke="#127a60" stroke-width="0.8" /><circle cx="343.0" cy="233.0" r="4.0" fill="none" stroke="#127a60" stroke-width="0.8" /><path d="M326.8 232.2L325.0 232.7L325.0 234.7L323.2 233.0L321.5 235.8L321.5 232.8L318.9 233.2L320.3 231.2L319.0 229.8L321.6 229.8L320.9 227.1L322.8 229.2L324.6 225.9L324.2 229.6L327.2 228.8L325.7 230.7L326.8 232.2Z" fill="#0c8a14" stroke="#28b028" stroke-width="0.7" stroke-linejoin="round"/><circle cx="323.4" cy="229.3" r="1.4" fill="#0a6a0e" stroke="#30b030" stroke-width="0.4" /><circle cx="321.3" cy="231.1" r="1.4" fill="#0a6a0e" stroke="#30b030" stroke-width="0.4" /><circle cx="324.5" cy="231.9" r="1.4" fill="#0a6a0e" stroke="#30b030" stroke-width="0.4" /><path d="M335.6 235.4L332.6 235.3L333.2 238.1L331.2 235.9L329.4 239.2L329.5 235.8L326.3 236.5L328.9 234.2L326.6 232.6L329.5 232.8L328.9 230.0L330.8 232.0L332.2 230.0L332.7 231.9L335.1 231.8L333.6 233.8L335.6 235.4Z" fill="#0c8a14" stroke="#28b028" stroke-width="0.7" stroke-linejoin="round"/><circle cx="332.2" cy="235.3" r="1.4" fill="#0a6a0e" stroke="#30b030" stroke-width="0.4" /><circle cx="329.3" cy="234.4" r="1.4" fill="#0a6a0e" stroke="#30b030" stroke-width="0.4" /><circle cx="332.3" cy="232.9" r="1.4" fill="#0a6a0e" stroke="#30b030" stroke-width="0.4" /><path d="M341.5 241.4L338.9 241.5L339.6 244.9L337.2 242.6L335.7 244.1L335.4 241.9L332.8 242.2L334.9 240.2L332.5 238.6L335.0 238.3L335.0 236.3L336.8 238.2L338.5 235.3L338.5 238.1L341.2 237.8L339.4 239.8L341.5 241.4Z" fill="#0c8a14" stroke="#28b028" stroke-width="0.7" stroke-linejoin="round"/><circle cx="337.8" cy="238.4" r="1.4" fill="#0a6a0e" stroke="#30b030" stroke-width="0.4" /><circle cx="336.8" cy="238.3" r="1.4" fill="#0a6a0e" stroke="#30b030" stroke-width="0.4" /><circle cx="338.7" cy="240.1" r="1.4" fill="#0a6a0e" stroke="#30b030" stroke-width="0.4" /><path d="M326.5 247.5L339.7 247.7M326.5 247.9L340.8 250.6M326.4 248.2L340.0 253.0M326.3 248.3L336.6 253.0M326.1 248.7L335.9 256.6M325.9 249.0L331.8 255.4M325.7 249.1L331.4 257.0M325.4 249.3L330.8 260.0M325.2 249.4L328.6 258.3M324.9 249.5L327.4 263.7M324.4 249.5L324.2 258.6M324.1 249.5L322.5 258.3M323.9 249.4L321.0 257.8M323.7 249.3L317.9 262.2M323.4 249.2L318.0 257.0M323.0 248.8L312.6 258.3M322.9 248.7L311.2 257.6M322.7 248.4L311.3 254.1M322.6 248.2L308.9 253.1M322.5 247.8L307.9 249.8M322.5 247.4L312.4 247.0M322.5 247.2L313.5 245.9M322.6 246.9L314.4 244.6M322.7 246.6L311.7 241.3M322.8 246.4L312.2 239.4M323.1 246.1L315.8 239.0M323.4 245.8L317.0 236.4M323.6 245.7L318.2 235.7M323.9 245.6L321.5 237.5M324.3 245.5L323.4 237.4M324.5 245.5L324.9 231.6M324.7 245.5L326.2 232.1M325.1 245.6L328.7 234.1M325.3 245.7L328.7 238.1M325.6 245.8L333.9 233.7M325.9 246.0L335.0 236.4M326.2 246.4L338.3 238.3M326.3 246.6L335.5 241.7M326.4 246.9L339.2 242.8M326.5 247.1L339.4 244.5" stroke="#b8d880" stroke-width="0.6"/><circle cx="333.1" cy="250.2" r="1.6" fill="#c8e890" stroke="#c8e890" stroke-width="0" /><circle cx="329.5" cy="255.3" r="1.6" fill="#c8e890" stroke="#c8e890" stroke-width="0" /><circle cx="323.9" cy="252.6" r="1.6" fill="#c8e890" stroke="#c8e890" stroke-width="0" /><circle cx="317.4" cy="254.1" r="1.6" fill="#c8e890" stroke="#c8e890" stroke-width="0" /><circle cx="319.1" cy="247.8" r="1.6" fill="#c8e890" stroke="#c8e890" stroke-width="0" /><circle cx="319.2" cy="243.4" r="1.6" fill="#c8e890" stroke="#c8e890" stroke-width="0" /><circle cx="322.7" cy="239.6" r="1.6" fill="#c8e890" stroke="#c8e890" stroke-width="0" /><circle cx="328.9" cy="239.0" r="1.6" fill="#c8e890" stroke="#c8e890" stroke-width="0" /><circle cx="330.7" cy="244.9" r="1.6" fill="#c8e890" stroke="#c8e890" stroke-width="0" /><circle cx="324.5" cy="247.5" r="4.5" fill="#a8c878" stroke="#b0d080" stroke-width="0" /></svg>
<div class="a" style="left:744px;top:72.5px;width:8px;height:318px;background:#f0f0f0"></div>
<svg class="a" style="left:745px;top:74px" width="6" height="5"><path d="M1 3.5L3 1.5 5 3.5" fill="none" stroke="#a8a8a8" stroke-width=".8"/></svg>
<svg class="a" style="left:745px;top:380px" width="6" height="5"><path d="M1 1.5L3 3.5 5 1.5" fill="none" stroke="#a8a8a8" stroke-width=".8"/></svg>
<div class="a" style="left:747px;top:290.5px;width:5px;height:29px;background:#3c4450;border-radius:1px"></div>
<div class="a" style="left:748.5px;top:304px;width:2px;height:2px;background:#70b040"></div><div class="a" style="left:748.5px;top:309px;width:2px;height:2px;background:#40a0a0"></div><div class="a" style="left:748.5px;top:313px;width:2px;height:3px;background:#30a090"></div>
<div class="a" style="left:61px;top:390.5px;width:691px;height:9px;background:#f0f0f0"></div>
<svg class="a" style="left:62px;top:392px" width="5" height="6"><path d="M3.5 1L1.5 3 3.5 5" fill="none" stroke="#a8a8a8" stroke-width=".8"/></svg>
<svg class="a" style="left:735px;top:392px" width="5" height="6"><path d="M1.5 1L3.5 3 1.5 5" fill="none" stroke="#a8a8a8" stroke-width=".8"/></svg>
<div class="a" style="left:0;top:399px;width:752px;height:25px;background:#c0c0c0"></div>
<div class="a" style="left:1px;top:399.5px;width:750px;height:23px;border:1.5px solid #909090;border-bottom-color:#606060;background:#fff"></div>
<div class="a" style="left:741px;top:401px;width:8px;height:20px;background:#f0f0f0"></div>
<svg class="a" style="left:742px;top:402px" width="6" height="5"><path d="M1 3.5L3 1.5 5 3.5" fill="none" stroke="#606060" stroke-width=".8"/></svg>
<svg class="a" style="left:742px;top:415px" width="6" height="5"><path d="M1 1.5L3 3.5 5 1.5" fill="none" stroke="#606060" stroke-width=".8"/></svg>
<div class="cmd" style="left:4.5px;top:402.6px">          [ 2D Location ]
Command : SAVE DRAWING AS
Command :</div>
<div class="a" style="left:0;top:422.5px;width:753px;height:1.5px;background:#c8c8c8"></div>
<div class="a" style="left:569px;top:139px;width:162px;height:46px;background:#c8c8c8;border:1px solid #e0e0e0;border-right-color:#a8a8a8;border-bottom-color:#a8a8a8"></div><div class="a" style="left:570px;top:140.5px;width:160px;height:10px;background:#a4c0dc"></div><div class="t" style="left:573px;top:142.3px;font-size:6.1px;color:#101828">Edit [Modify]</div><div class="a" style="left:712.5px;top:141.5px;width:7px;height:7.5px;background:#b0c6dc;border:0.5px solid #dce8f4"></div><div class="a" style="left:714.5px;top:146.5px;width:3px;height:1px;background:#202020"></div><div class="a" style="left:720.5px;top:141.5px;width:7px;height:7.5px;background:#b0c6dc;border:0.5px solid #dce8f4"></div><svg class="a" style="left:721.5px;top:142.7px" width="5" height="5"><path d="M.5 .5L4.5 4.5M4.5 .5L.5 4.5" stroke="#202020" stroke-width=".9"/></svg><div class="eb" style="left:571.0px;top:151.5px;height:16px"><svg width="16" height="16" viewBox="-1 -1 17 17"><rect x="3" y="3" width="3" height="3" fill="#fff" stroke="#303030" stroke-width=".7"/><rect x="9" y="10" width="3" height="3" fill="#fff" stroke="#303030" stroke-width=".7"/><path d="M6 4l6 5M5 6l5 5" stroke="#2030e0" stroke-width=".8"/></svg></div><div class="eb" style="left:586.9px;top:151.5px;height:16px"><svg width="16" height="16" viewBox="-1 -1 17 17"><rect x="2" y="3" width="3" height="3" fill="#fff" stroke="#303030" stroke-width=".6"/><rect x="10" y="3" width="3" height="3" fill="#fff" stroke="#303030" stroke-width=".6"/><path d="M5 4.5h5M2 9h11" stroke="#2030e0" stroke-width=".9"/><rect x="6" y="10" width="2" height="2" fill="#606060"/><path d="M11 15h4v-4z" fill="#2a6ae0"/></svg></div><div class="eb" style="left:602.7px;top:151.5px;height:16px"><svg width="16" height="16" viewBox="-1 -1 17 17"><rect x="3" y="7" width="5" height="5" fill="#fff" stroke="#404040" stroke-width=".7"/><path d="M6 8l5-5" stroke="#2030e0" stroke-width=".8"/><rect x="7" y="4" width="5" height="5" fill="none" stroke="#b0b0b0" stroke-width=".6"/></svg></div><div class="eb" style="left:618.5px;top:151.5px;height:16px"><svg width="16" height="16" viewBox="-1 -1 17 17"><path d="M3 5a5 5 0 0 1 9 6" fill="none" stroke="#606060" stroke-width=".9"/><path d="M8 3v5" stroke="#806040" stroke-width="1.5"/><circle cx="3" cy="5" r="1" fill="#2030e0"/><circle cx="8" cy="8" r="1" fill="#2030e0"/><circle cx="11" cy="12" r="1" fill="#2030e0"/></svg></div><div class="eb" style="left:634.4px;top:151.5px;height:16px"><svg width="16" height="16" viewBox="-1 -1 17 17"><path d="M3 3l9 9" stroke="#303030" stroke-width=".8"/><path d="M4 8l7-3" stroke="#2030e0" stroke-width=".8"/><path d="M5 13l2-3 1 3" stroke="#b0b0b0" stroke-width=".6" fill="none"/><path d="M11 15h4v-4z" fill="#2a6ae0"/></svg></div><div class="eb" style="left:650.2px;top:151.5px;height:16px"><svg width="16" height="16" viewBox="-1 -1 17 17"><path d="M3 3l9 9" stroke="#303030" stroke-width=".8"/><path d="M3 6l9 3" stroke="#2030e0" stroke-width="1"/><path d="M5 13l2-3 1 3" stroke="#b0b0b0" stroke-width=".6" fill="none"/><path d="M11 15h4v-4z" fill="#2a6ae0"/></svg></div><div class="eb" style="left:666.1px;top:151.5px;height:16px"><svg width="16" height="16" viewBox="-1 -1 17 17"><path d="M3 12l3-8 3 8 3-8" fill="none" stroke="#2030e0" stroke-width="1"/></svg></div><div class="eb" style="left:682.0px;top:151.5px;height:16px"><svg width="16" height="16" viewBox="-1 -1 17 17"><path d="M4 3v9M11 6l-4 5" stroke="#2030e0" stroke-width="1"/><circle cx="4" cy="3" r="1" fill="#2030e0"/><circle cx="4" cy="12" r="1" fill="#2030e0"/><circle cx="11" cy="6" r="1" fill="#2030e0"/></svg></div><div class="eb" style="left:697.8px;top:151.5px;height:16px"><svg width="16" height="16" viewBox="-1 -1 17 17"><rect x="2" y="3" width="5" height="4" fill="none" stroke="#404040" stroke-width=".7"/><rect x="2" y="8" width="5" height="4" fill="none" stroke="#404040" stroke-width=".7"/><circle cx="10" cy="7" r="2.5" fill="#fff" stroke="#6070c0" stroke-width=".6"/><path d="M11 15h4v-4z" fill="#2a6ae0"/></svg></div><div class="eb" style="left:713.6px;top:151.5px;height:16px"><svg width="16" height="16" viewBox="-1 -1 17 17"><path d="M8 2v11" stroke="#2030e0" stroke-width="1"/><path d="M3 5h3v6M5 5v6" stroke="#505050" stroke-width=".7"/><path d="M10 5h3v3l-1 3" stroke="#b8b8b8" stroke-width=".6" fill="none"/></svg></div><div class="eb" style="left:571.0px;top:167.7px;height:16px"><svg width="16" height="16" viewBox="-1 -1 17 17"><path d="M3 3l9 9" stroke="#303030" stroke-width=".8"/><path d="M4 9l7-3" stroke="#2030e0" stroke-width=".8"/><path d="M11 15h4v-4z" fill="#2a6ae0"/></svg></div><div class="eb" style="left:586.9px;top:167.7px;height:16px"><svg width="16" height="16" viewBox="-1 -1 17 17"><circle cx="4" cy="4" r="1" fill="#404040"/><circle cx="4" cy="8" r="1" fill="#404040"/><circle cx="4" cy="12" r="1" fill="#404040"/><path d="M8 4h4M8 8h4M8 12h4M11 3v10" stroke="#2030e0" stroke-width=".8"/><path d="M11 15h4v-4z" fill="#2a6ae0"/></svg></div><div class="eb" style="left:602.7px;top:167.7px;height:16px"><svg width="16" height="16" viewBox="-1 -1 17 17"><circle cx="9" cy="6" r="3.5" fill="none" stroke="#5070d0" stroke-width=".9"/><circle cx="3.5" cy="11" r="1.2" fill="#2030e0"/><path d="M4 2h2M11 10l2 2" stroke="#f0f0f0" stroke-width="1"/></svg></div><div class="eb" style="left:618.5px;top:167.7px;height:16px"><svg width="16" height="16" viewBox="-1 -1 17 17"><path d="M3 2v11h10" stroke="#2030e0" stroke-width=".9" fill="none"/><path d="M3 12l9-8" stroke="#404040" stroke-width=".8"/><path d="M3 6h5v6" stroke="#404040" stroke-width=".6" fill="none"/></svg></div><div class="eb" style="left:634.4px;top:167.7px;height:16px"><svg width="16" height="16" viewBox="-1 -1 17 17"><rect x="2.5" y="3" width="10" height="9" fill="#fffef0" stroke="#202020" stroke-width="1.2"/><text x="5" y="10" font-size="5" font-family="Liberation Sans" fill="#303030">ef</text><path d="M11 15h4v-4z" fill="#2a6ae0"/></svg></div><div class="eb" style="left:650.2px;top:167.7px;height:16px"><svg width="16" height="16" viewBox="-1 -1 17 17"><rect x="2" y="3" width="11" height="7" fill="#fffcf0" stroke="#606060" stroke-width=".7"/><path d="M2 11h11M2 12.5h11" stroke="#303030" stroke-width=".8"/></svg></div><div class="eb" style="left:666.1px;top:167.7px;height:16px"><svg width="16" height="16" viewBox="-1 -1 17 17"><path d="M2 10h11v2H2z" fill="#404040"/><rect x="4" y="7" width="7" height="3" fill="#f8f8f0"/><circle cx="3" cy="5" r="1" fill="#2030e0"/><circle cx="12" cy="5" r="1" fill="#2030e0"/><circle cx="7.5" cy="4" r="1" fill="#2030e0"/></svg></div><div class="eb" style="left:682.0px;top:167.7px;height:16px"><svg width="16" height="16" viewBox="-1 -1 17 17"><rect x="2" y="3" width="5" height="3" fill="none" stroke="#404040" stroke-width=".7"/><path d="M7 11l4-7M4 9l4 3" stroke="#2030e0" stroke-width=".8"/><circle cx="11" cy="4" r="1" fill="#2030e0"/><circle cx="7" cy="12" r="1" fill="#2030e0"/></svg></div><div class="eb" style="left:697.8px;top:167.7px;height:16px"><svg width="16" height="16" viewBox="-1 -1 17 17"><path d="M4 4h7l2 3-2 4H4L2 7z" fill="#fff" stroke="#202020" stroke-width="1"/></svg></div><div class="eb" style="left:713.6px;top:167.7px;height:16px"><svg width="16" height="16" viewBox="-1 -1 17 17"><path d="M2 8c0-5 10-6 11-2" fill="none" stroke="#4060d0" stroke-width="1.5"/><rect x="5" y="6" width="8" height="5" fill="#f8f0e0"/><path d="M2 9c1 2 3 3 5 2" stroke="#d09060" stroke-width="1"/></svg></div>
</body></html>
